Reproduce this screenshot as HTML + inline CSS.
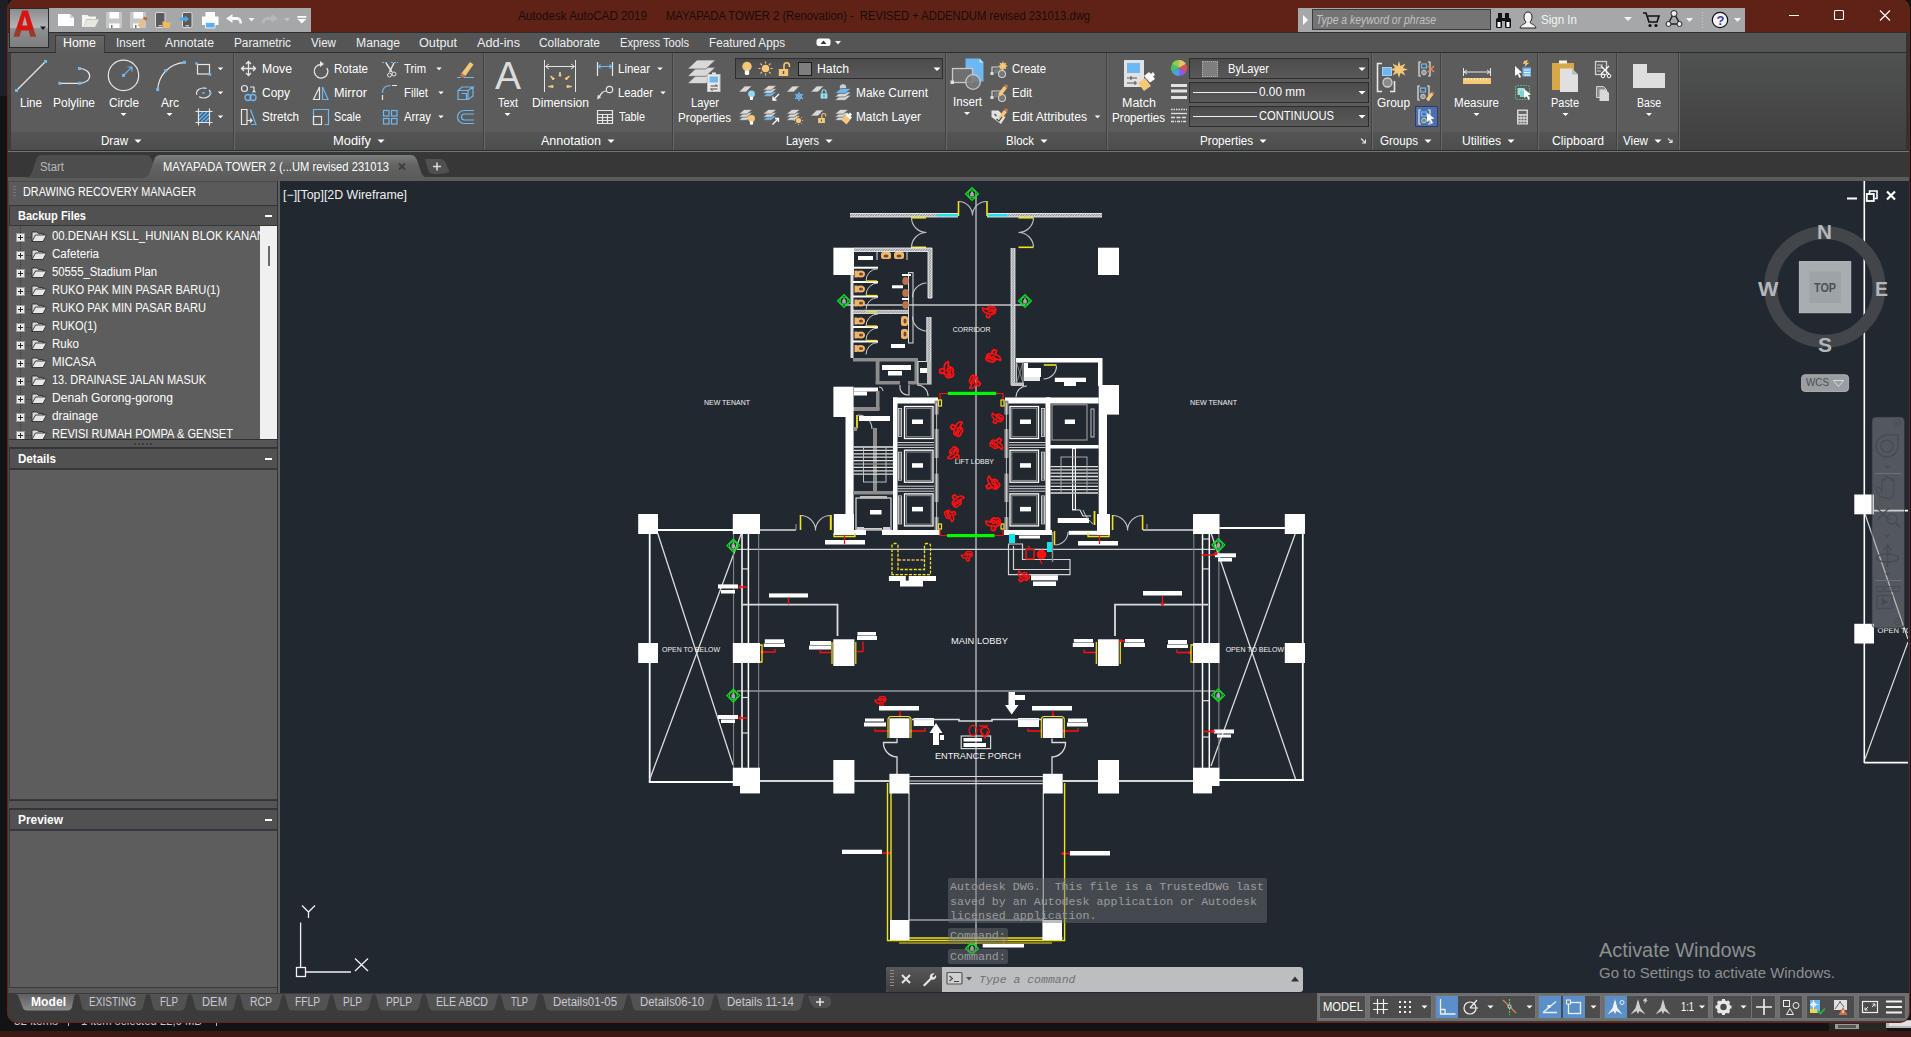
<!DOCTYPE html>
<html lang="en"><head><meta charset="utf-8"><title>Autodesk AutoCAD 2019 - MAYAPADA TOWER 2</title>
<style>
html,body{margin:0;padding:0;background:#131315;}
body{width:1911px;height:1037px;overflow:hidden;position:relative;font-family:"Liberation Sans",sans-serif;}
.b{position:absolute;display:block;}
.t{position:absolute;white-space:nowrap;transform-origin:0 50%;display:block;}
</style></head>
<body>
<div class="b" style="left:0px;top:0px;width:1911px;height:1037px;background:#131315;"></div>
<div class="b" style="left:0px;top:0px;width:8px;height:96px;background:#1d2026;"></div>
<div class="b" style="left:0px;top:1031px;width:1911px;height:6px;background:#3a1a12;"></div>
<span class="t" style="left:14px;top:1012.5px;height:16px;line-height:16px;font-size:12px;color:#c8c8c8;transform:scaleX(0.9702);">32 items</span>
<span class="t" style="left:81px;top:1012.5px;height:16px;line-height:16px;font-size:12px;color:#c8c8c8;transform:scaleX(0.9389);">1 item selected  22,6 MB</span>
<div class="b" style="left:68px;top:1014px;width:1px;height:12px;background:#bbb;"></div>
<div class="b" style="left:216px;top:1014px;width:1px;height:12px;background:#bbb;"></div>
<div class="b" style="left:1829px;top:1022px;width:58px;height:9px;background:#262626;"></div>
<div class="b" style="left:1835px;top:1024px;width:24px;height:5px;background:#9a9a9a;"></div>
<div class="b" style="left:1838px;top:1025px;width:18px;height:3px;background:#555;"></div>
<div class="b" style="left:1886px;top:1020px;width:25px;height:8px;background:#b5b5b5;"></div>
<div class="b" style="left:1889px;top:1021px;width:22px;height:5px;background:#e0e0e0;"></div>
<div class="b" id="win" style="left:8px;top:0;width:1901px;height:1022px;background:#3b3b3b;border-radius:9px 9px 9px 9px;overflow:hidden;box-shadow:0 0 0 1px #6a2415">
<div class="b" style="left:-8px;top:0;width:1911px;height:1037px">
<div class="b" style="left:8px;top:0px;width:1901px;height:32px;background:#5f2216;"></div>
<span class="t" style="left:518px;top:7.5px;height:16px;line-height:16px;font-size:12px;color:#1c0b08;transform:scaleX(0.9717);">Autodesk AutoCAD 2019</span>
<span class="t" style="left:666px;top:7.5px;height:16px;line-height:16px;font-size:12px;color:#1c0b08;transform:scaleX(0.9366);white-space:pre;">MAYAPADA TOWER 2 (Renovation) -  REVISED + ADDENDUM revised 231013.dwg</span>
<svg class="b" style="left:1780px;top:4px;" width="120" height="24" viewBox="0 0 120 24"><g stroke="#fff" stroke-width="1.1" fill="none"><path d="M9 11.5h10"/><rect x="54.5" y="6.5" width="9" height="9" rx="1"/><path d="M100 6.5l10 10M110 6.5l-10 10"/></g></svg>
<div class="b" style="left:49px;top:8px;width:262px;height:24px;background:#a6a7a9;"></div>
<svg class="b" style="left:49px;top:8px;" width="262" height="24" viewBox="0 0 262 24"><path d="M9 6h12l4 4v8H9z" fill="#fff"/><path d="M21 6v4h4z" fill="#d0d0d0"/><path d="M33 7h5.500l1.500 1.500h7V11H37.500L34.500 19H33z" fill="#f4f4f0"/><path d="M37.800 11.500H50L46 19H34.500z" fill="#e8e7e0"/><path d="M57 4h16v16H57z" fill="#c6c6c6"/><path d="M60.500 4h9.500v6.500h-9.500z" fill="#fff"/><path d="M60 15.500h10.500V20H60z" fill="#fff"/><path d="M62 17h1.500v3H62z" fill="#777"/><path d="M81 4h16v16H81z" fill="#c6c6c6"/><path d="M84.500 4h9.500v6.500h-9.500z" fill="#fff"/><path d="M84 15.500h7V20H84z" fill="#fff"/><path d="M86 17h1.500v3H86z" fill="#777"/><path d="M88.500 17.500l5.500-7 3 2.300-5.500 7z" fill="#ecbd7e"/><path d="M94 10.500l1.500-2 3 2.300-1.500 2z" fill="#b56a40"/><rect x="106.500" y="4.500" width="9.500" height="15" rx="1.500" fill="#5a5a5a" stroke="#dadada"/><rect x="109.500" y="17.300" width="3.500" height="1" fill="#eee"/><path d="M113.500 13.500h3l1 1h4.500l-1.500 5.500h-7z" fill="#f0b95e"/><rect x="133.500" y="4.500" width="9.500" height="15" rx="1.500" fill="#5a5a5a" stroke="#dadada"/><rect x="136.500" y="17.300" width="3.500" height="1" fill="#eee"/><path d="M131 9.500h5V7.500l4 3.500-4 3.500V12.500h-5z" fill="#4ea6ea"/><path d="M156.500 4h9.500v5h-9.500z" fill="#fff"/><path d="M153 8.500h16.500v8.500H153z" fill="#fff"/><path d="M156.500 14.500h9.500V20h-9.500z" fill="#5ab0f2" stroke="#fff" stroke-width=".800"/><path d="M177 10.500l6.500-4.500v3h4c3.500 0 5.500 2.500 5.500 6.500h-2.500c0-2-1-3.500-3-3.500h-4v3z" fill="#f6f6f6"/><path d="M199.500 10h6l-3 3.500z" fill="#f6f6f6"/><path d="M229 10.500l-6.500-4.500v3h-4c-3.500 0-5.500 2.500-5.500 6.500h2.500c0-2 1-3.500 3-3.500h4v3z" fill="#b6b7b9"/><path d="M235 10h6l-3 3.500z" fill="#c2c3c5"/><path d="M248.300 8h9v1.700h-9z M248.300 11h9l-4.500 4.500z" fill="#fff"/></svg>
<div class="b" style="left:1298px;top:8px;width:447px;height:24px;background:#a6a7a9;"></div>
<svg class="b" style="left:1298px;top:8px;" width="14" height="24" viewBox="0 0 14 24"><path d="M5 7l5 5-5 5z" fill="#fff"/></svg>
<div class="b" style="left:1312px;top:9px;width:179px;height:21px;background:#747474;border:1px solid #3c3c3c;box-sizing:border-box;"></div>
<span class="t" style="left:1316px;top:11.5px;height:16px;line-height:16px;font-size:12px;color:#c3c3c3;font-style:italic;transform:scaleX(0.8706);">Type a keyword or phrase</span>
<svg class="b" style="left:1496px;top:10px;" width="16" height="20" viewBox="0 0 16 20"><g fill="#111"><rect x="0" y="8" width="6" height="10" rx="1.500"/><rect x="9" y="8" width="6" height="10" rx="1.500"/><rect x="2" y="3" width="4" height="6"/><rect x="9" y="3" width="4" height="6"/><rect x="6" y="8" width="3" height="3"/></g><rect x="1.500" y="12" width="3" height="5" fill="#fff"/><rect x="10.500" y="12" width="3" height="5" fill="#fff"/></svg>
<svg class="b" style="left:1519px;top:10px;" width="18" height="20" viewBox="0 0 18 20"><path d="M9 2c3 0 4 2.500 4 5s-1 4-2 5c0 2 5 2 6 6H1c1-4 6-4 6-6-1-1-2-2.500-2-5s1-5 4-5z" fill="#f4f4f4" stroke="#222" stroke-width="1"/></svg>
<span class="t" style="left:1541px;top:12.0px;height:16px;line-height:16px;font-size:12px;color:#eef6ee;transform:scaleX(0.9636);">Sign In</span>
<svg class="b" style="left:1624px;top:17px;" width="9" height="6" viewBox="0 0 9 6"><path d="M0 0h8l-4 4z" fill="#f4f4f4"/></svg>
<svg class="b" style="left:1642px;top:10px;" width="18" height="20" viewBox="0 0 18 20"><path d="M1 3h3l3 9h8l2-6H6" fill="none" stroke="#111" stroke-width="1.600"/><circle cx="8" cy="15.500" r="1.600" fill="#111"/><circle cx="14" cy="15.500" r="1.600" fill="#111"/></svg>
<svg class="b" style="left:1665px;top:9px;" width="18" height="20" viewBox="0 0 18 20"><path d="M9 4L3 15h12z" fill="none" stroke="#222" stroke-width="1.500"/><circle cx="9" cy="4.500" r="3" fill="#eee" stroke="#222"/><circle cx="3.500" cy="15" r="2.500" fill="#eee" stroke="#222"/><circle cx="14.500" cy="15" r="2.500" fill="#eee" stroke="#222"/></svg>
<svg class="b" style="left:1686px;top:18px;" width="9" height="6" viewBox="0 0 9 6"><path d="M0 0h7l-3.500 4z" fill="#f4f4f4"/></svg>
<div class="b" style="left:1702px;top:12px;width:1px;height:16px;background:repeating-linear-gradient(#c8c8c8 0 1px,transparent 1px 3px);"></div>
<svg class="b" style="left:1711px;top:11px;" width="18" height="18" viewBox="0 0 18 18"><circle cx="9" cy="9" r="7.700" fill="#f4f4f4" stroke="#111" stroke-width="1.200"/></svg>
<span class="t" style="left:1716.5px;top:11.5px;height:17px;line-height:17px;font-size:13px;color:#3b3b9a;font-weight:bold;">?</span>
<svg class="b" style="left:1734px;top:18px;" width="9" height="6" viewBox="0 0 9 6"><path d="M0 0h7l-3.500 4z" fill="#f4f4f4"/></svg>
<div class="b" style="left:8px;top:33px;width:1901px;height:20px;background:#555;"></div>
<div class="b" style="left:8px;top:32px;width:1901px;height:1px;background:#2b2e31;"></div>
<div class="b" style="left:8px;top:52px;width:1901px;height:1.2px;background:#2b2e31;"></div>
<div class="b" style="left:55px;top:35px;width:50px;height:18px;background:linear-gradient(#676767,#5c5c5c);border:1px solid #3a3a3a;border-bottom:none;box-sizing:border-box;"></div>
<span class="t" style="left:63px;top:34.5px;height:16px;line-height:16px;font-size:12px;color:#fff;transform:scaleX(1.0309);">Home</span>
<span class="t" style="left:116px;top:34.5px;height:16px;line-height:16px;font-size:12px;color:#ecf0f4;transform:scaleX(0.9663);">Insert</span>
<span class="t" style="left:165px;top:34.5px;height:16px;line-height:16px;font-size:12px;color:#ecf0f4;transform:scaleX(1.0200);">Annotate</span>
<span class="t" style="left:234px;top:34.5px;height:16px;line-height:16px;font-size:12px;color:#ecf0f4;transform:scaleX(0.9825);">Parametric</span>
<span class="t" style="left:311px;top:34.5px;height:16px;line-height:16px;font-size:12px;color:#ecf0f4;transform:scaleX(0.9693);">View</span>
<span class="t" style="left:356px;top:34.5px;height:16px;line-height:16px;font-size:12px;color:#ecf0f4;transform:scaleX(1.0146);">Manage</span>
<span class="t" style="left:419px;top:34.5px;height:16px;line-height:16px;font-size:12px;color:#ecf0f4;transform:scaleX(1.0549);">Output</span>
<span class="t" style="left:477px;top:34.5px;height:16px;line-height:16px;font-size:12px;color:#ecf0f4;transform:scaleX(1.0568);">Add-ins</span>
<span class="t" style="left:539px;top:34.5px;height:16px;line-height:16px;font-size:12px;color:#ecf0f4;transform:scaleX(0.9940);">Collaborate</span>
<span class="t" style="left:620px;top:34.5px;height:16px;line-height:16px;font-size:12px;color:#ecf0f4;transform:scaleX(0.9264);">Express Tools</span>
<span class="t" style="left:709px;top:34.5px;height:16px;line-height:16px;font-size:12px;color:#ecf0f4;transform:scaleX(0.9737);">Featured Apps</span>
<svg class="b" style="left:816px;top:38px;" width="30" height="10" viewBox="0 0 30 10"><rect x="0.500" y="0.500" width="14" height="7.500" rx="2.500" fill="#fff"/><path d="M4.500 6h6l-3-3.500z" fill="#333"/><path d="M19 3h6l-3 3.500z" fill="#f0f0f0"/></svg>
<div class="b" style="left:8px;top:53px;width:1901px;height:98px;background:#5c5c5c;"></div>
<div class="b" style="left:1679px;top:53px;width:230px;height:98px;background:linear-gradient(#505251,#3f3f3f);"></div>
<div class="b" style="left:8px;top:150px;width:1901px;height:1px;background:#2b2e31;"></div>
<div class="b" style="left:8px;top:53px;width:2.5px;height:98px;background:#3c3c3c;"></div>
<div class="b" style="left:1906px;top:32px;width:3px;height:119px;background:#333;"></div>
<div class="b" style="left:11px;top:132px;width:222px;height:18px;background:linear-gradient(#545555,#4c4d4d);"></div>
<div class="b" style="left:233px;top:53px;width:1px;height:97px;background:#424242;"></div>
<div class="b" style="left:234px;top:53px;width:1px;height:97px;background:#676767;"></div>
<div class="b" style="left:235px;top:132px;width:248px;height:18px;background:linear-gradient(#545555,#4c4d4d);"></div>
<div class="b" style="left:483px;top:53px;width:1px;height:97px;background:#424242;"></div>
<div class="b" style="left:484px;top:53px;width:1px;height:97px;background:#676767;"></div>
<div class="b" style="left:485px;top:132px;width:187px;height:18px;background:linear-gradient(#545555,#4c4d4d);"></div>
<div class="b" style="left:672px;top:53px;width:1px;height:97px;background:#424242;"></div>
<div class="b" style="left:673px;top:53px;width:1px;height:97px;background:#676767;"></div>
<div class="b" style="left:674px;top:132px;width:271px;height:18px;background:linear-gradient(#545555,#4c4d4d);"></div>
<div class="b" style="left:945px;top:53px;width:1px;height:97px;background:#424242;"></div>
<div class="b" style="left:946px;top:53px;width:1px;height:97px;background:#676767;"></div>
<div class="b" style="left:947px;top:132px;width:159px;height:18px;background:linear-gradient(#545555,#4c4d4d);"></div>
<div class="b" style="left:1106px;top:53px;width:1px;height:97px;background:#424242;"></div>
<div class="b" style="left:1107px;top:53px;width:1px;height:97px;background:#676767;"></div>
<div class="b" style="left:1108px;top:132px;width:263px;height:18px;background:linear-gradient(#545555,#4c4d4d);"></div>
<div class="b" style="left:1371px;top:53px;width:1px;height:97px;background:#424242;"></div>
<div class="b" style="left:1372px;top:53px;width:1px;height:97px;background:#676767;"></div>
<div class="b" style="left:1373px;top:132px;width:67px;height:18px;background:linear-gradient(#545555,#4c4d4d);"></div>
<div class="b" style="left:1440px;top:53px;width:1px;height:97px;background:#424242;"></div>
<div class="b" style="left:1441px;top:53px;width:1px;height:97px;background:#676767;"></div>
<div class="b" style="left:1442px;top:132px;width:95px;height:18px;background:linear-gradient(#545555,#4c4d4d);"></div>
<div class="b" style="left:1537px;top:53px;width:1px;height:97px;background:#424242;"></div>
<div class="b" style="left:1538px;top:53px;width:1px;height:97px;background:#676767;"></div>
<div class="b" style="left:1539px;top:132px;width:77px;height:18px;background:linear-gradient(#545555,#4c4d4d);"></div>
<div class="b" style="left:1616px;top:53px;width:1px;height:97px;background:#424242;"></div>
<div class="b" style="left:1617px;top:53px;width:1px;height:97px;background:#676767;"></div>
<div class="b" style="left:1618px;top:132px;width:60px;height:18px;background:linear-gradient(#545555,#4c4d4d);"></div>
<div class="b" style="left:1678px;top:53px;width:1px;height:97px;background:#424242;"></div>
<div class="b" style="left:1679px;top:53px;width:1px;height:97px;background:#676767;"></div>
<div class="b" style="left:8px;top:151px;width:1901px;height:1px;background:#727476;"></div>
<div class="b" style="left:9px;top:8px;width:40px;height:40px;background:linear-gradient(#8b8c8e,#b4b5b6 48%,#8e8f90 52%,#7d7e7f);border:1px solid #2a2a2a;box-sizing:border-box;"></div>
<svg class="b" style="left:11px;top:9px;" width="36" height="30" viewBox="0 0 36 30"><g transform="translate(0.5 0) scale(.86 1)"><path d="M2.500 27.500L12.500 1.500h6.500l9.500 26h-6.500l-1.800-6h-9l-2 6z M12.500 16.500h6l-3-9.500z" fill="#d81410" fill-rule="evenodd"/><path d="M2.500 27.500l3-8 5.500 2-2 6zM22 27.500l-1.800-6 4.500-1.500 3.800 7.500z" fill="#93402a"/></g><path d="M29 17.500h6l-3 3.500z" fill="#1c1c1c"/></svg>
<span class="t" style="left:20px;top:94.5px;height:16px;line-height:16px;font-size:12px;color:#fff;transform:scaleX(0.9697);">Line</span>
<span class="t" style="left:53px;top:94.5px;height:16px;line-height:16px;font-size:12px;color:#fff;transform:scaleX(0.9994);">Polyline</span>
<span class="t" style="left:109px;top:94.5px;height:16px;line-height:16px;font-size:12px;color:#fff;transform:scaleX(0.9782);">Circle</span>
<span class="t" style="left:161px;top:94.5px;height:16px;line-height:16px;font-size:12px;color:#fff;transform:scaleX(1.0000);">Arc</span>
<span class="t" style="left:262px;top:60.5px;height:16px;line-height:16px;font-size:12px;color:#fff;transform:scaleX(1.0224);">Move</span>
<span class="t" style="left:262px;top:85.0px;height:16px;line-height:16px;font-size:12px;color:#fff;transform:scaleX(0.9995);">Copy</span>
<span class="t" style="left:262px;top:109.0px;height:16px;line-height:16px;font-size:12px;color:#fff;transform:scaleX(0.9733);">Stretch</span>
<span class="t" style="left:334px;top:60.5px;height:16px;line-height:16px;font-size:12px;color:#fff;transform:scaleX(0.9617);">Rotate</span>
<span class="t" style="left:334px;top:85.0px;height:16px;line-height:16px;font-size:12px;color:#fff;transform:scaleX(1.0535);">Mirror</span>
<span class="t" style="left:334px;top:109.0px;height:16px;line-height:16px;font-size:12px;color:#fff;transform:scaleX(0.8995);">Scale</span>
<span class="t" style="left:404px;top:60.5px;height:16px;line-height:16px;font-size:12px;color:#fff;transform:scaleX(0.9345);">Trim</span>
<span class="t" style="left:404px;top:85.0px;height:16px;line-height:16px;font-size:12px;color:#fff;transform:scaleX(0.9473);">Fillet</span>
<span class="t" style="left:404px;top:109.0px;height:16px;line-height:16px;font-size:12px;color:#fff;transform:scaleX(0.9418);">Array</span>
<span class="t" style="left:495px;top:55.0px;height:42px;line-height:42px;font-size:38px;color:#dcdcdc;transform:scaleX(1.0258);">A</span>
<span class="t" style="left:498px;top:94.5px;height:16px;line-height:16px;font-size:12px;color:#fff;transform:scaleX(0.9088);">Text</span>
<span class="t" style="left:532px;top:94.5px;height:16px;line-height:16px;font-size:12px;color:#fff;transform:scaleX(1.0055);">Dimension</span>
<span class="t" style="left:618px;top:60.5px;height:16px;line-height:16px;font-size:12px;color:#fff;transform:scaleX(0.9593);">Linear</span>
<span class="t" style="left:618px;top:85.0px;height:16px;line-height:16px;font-size:12px;color:#fff;transform:scaleX(0.9367);">Leader</span>
<span class="t" style="left:619px;top:109.0px;height:16px;line-height:16px;font-size:12px;color:#fff;transform:scaleX(0.9063);">Table</span>
<span class="t" style="left:691px;top:94.5px;height:16px;line-height:16px;font-size:12px;color:#fff;transform:scaleX(0.9328);">Layer</span>
<span class="t" style="left:678px;top:109.5px;height:16px;line-height:16px;font-size:12px;color:#fff;transform:scaleX(0.9691);">Properties</span>
<div class="b" style="left:735px;top:58px;width:208px;height:21px;background:linear-gradient(#4c4c4c,#585858);border:1px solid #2e2e2e;box-sizing:border-box;"></div>
<div class="b" style="left:798px;top:62px;width:14px;height:14px;background:#7e7e7e;border:1px solid #1c1c1c;box-sizing:border-box;"></div>
<span class="t" style="left:817px;top:60.5px;height:16px;line-height:16px;font-size:12px;color:#fff;transform:scaleX(1.0208);">Hatch</span>
<span class="t" style="left:856px;top:85.0px;height:16px;line-height:16px;font-size:12px;color:#fff;transform:scaleX(0.9905);">Make Current</span>
<span class="t" style="left:856px;top:109.0px;height:16px;line-height:16px;font-size:12px;color:#fff;transform:scaleX(0.9844);">Match Layer</span>
<span class="t" style="left:953px;top:94.0px;height:16px;line-height:16px;font-size:12px;color:#fff;transform:scaleX(0.9663);">Insert</span>
<span class="t" style="left:1012px;top:60.5px;height:16px;line-height:16px;font-size:12px;color:#fff;transform:scaleX(0.9440);">Create</span>
<span class="t" style="left:1012px;top:85.0px;height:16px;line-height:16px;font-size:12px;color:#fff;transform:scaleX(0.9672);">Edit</span>
<span class="t" style="left:1012px;top:109.0px;height:16px;line-height:16px;font-size:12px;color:#fff;transform:scaleX(1.0130);">Edit Attributes</span>
<span class="t" style="left:1122px;top:94.5px;height:16px;line-height:16px;font-size:12px;color:#fff;transform:scaleX(1.0405);">Match</span>
<span class="t" style="left:1112px;top:109.5px;height:16px;line-height:16px;font-size:12px;color:#fff;transform:scaleX(0.9691);">Properties</span>
<div class="b" style="left:1189px;top:58px;width:180px;height:21px;background:linear-gradient(#4c4c4c,#585858);border:1px solid #2e2e2e;box-sizing:border-box;"></div>
<div class="b" style="left:1189px;top:82px;width:180px;height:21px;background:linear-gradient(#4c4c4c,#585858);border:1px solid #2e2e2e;box-sizing:border-box;"></div>
<div class="b" style="left:1189px;top:105.5px;width:180px;height:21px;background:linear-gradient(#4c4c4c,#585858);border:1px solid #2e2e2e;box-sizing:border-box;"></div>
<div class="b" style="left:1202px;top:61px;width:16px;height:16px;background:#7e7e7e;border:1px dotted #aaa;box-sizing:border-box;"></div>
<span class="t" style="left:1228px;top:60.5px;height:16px;line-height:16px;font-size:12px;color:#fff;transform:scaleX(0.9314);">ByLayer</span>
<div class="b" style="left:1193px;top:91.5px;width:64px;height:1.3px;background:#f0f0f0;"></div>
<span class="t" style="left:1259px;top:84.0px;height:16px;line-height:16px;font-size:12px;color:#fff;transform:scaleX(0.9854);">0.00 mm</span>
<div class="b" style="left:1193px;top:115.5px;width:64px;height:1.3px;background:#f0f0f0;"></div>
<span class="t" style="left:1259px;top:108.0px;height:16px;line-height:16px;font-size:12px;color:#fff;transform:scaleX(0.9298);">CONTINUOUS</span>
<span class="t" style="left:1377px;top:94.5px;height:16px;line-height:16px;font-size:12px;color:#fff;transform:scaleX(0.9895);">Group</span>
<div class="b" style="left:1415px;top:106px;width:23px;height:21px;background:#4d6fae;border:1px solid #2d3c6a;box-sizing:border-box;"></div>
<span class="t" style="left:1454px;top:94.5px;height:16px;line-height:16px;font-size:12px;color:#fff;transform:scaleX(0.9639);">Measure</span>
<span class="t" style="left:1551px;top:94.5px;height:16px;line-height:16px;font-size:12px;color:#fff;transform:scaleX(0.9125);">Paste</span>
<span class="t" style="left:1637px;top:94.5px;height:16px;line-height:16px;font-size:12px;color:#fff;transform:scaleX(0.8775);">Base</span>
<span class="t" style="left:101px;top:132.5px;height:16px;line-height:16px;font-size:12px;color:#fff;transform:scaleX(0.9642);">Draw</span>
<span class="t" style="left:333px;top:132.5px;height:16px;line-height:16px;font-size:12px;color:#fff;transform:scaleX(1.0752);">Modify</span>
<span class="t" style="left:541px;top:132.5px;height:16px;line-height:16px;font-size:12px;color:#fff;transform:scaleX(1.0456);">Annotation</span>
<span class="t" style="left:786px;top:132.5px;height:16px;line-height:16px;font-size:12px;color:#fff;transform:scaleX(0.9162);">Layers</span>
<span class="t" style="left:1006px;top:132.5px;height:16px;line-height:16px;font-size:12px;color:#fff;transform:scaleX(0.9542);">Block</span>
<span class="t" style="left:1200px;top:132.5px;height:16px;line-height:16px;font-size:12px;color:#fff;transform:scaleX(0.9691);">Properties</span>
<span class="t" style="left:1380px;top:132.5px;height:16px;line-height:16px;font-size:12px;color:#fff;transform:scaleX(0.9657);">Groups</span>
<span class="t" style="left:1462px;top:132.5px;height:16px;line-height:16px;font-size:12px;color:#fff;transform:scaleX(1.0085);">Utilities</span>
<span class="t" style="left:1552px;top:132.5px;height:16px;line-height:16px;font-size:12px;color:#fff;transform:scaleX(1.0124);">Clipboard</span>
<span class="t" style="left:1623px;top:132.5px;height:16px;line-height:16px;font-size:12px;color:#fff;transform:scaleX(0.9693);">View</span>
<svg class="b" style="left:0;top:0" width="1911" height="160" viewBox="0 0 1911 160"><path d="M16.5 90.5L45.500 61.5" stroke="#e6e6e6" stroke-width="1.2"/><rect x="15.0" y="89.0" width="3" height="3" fill="#6db8f2"/><rect x="44.0" y="60.0" width="3" height="3" fill="#6db8f2"/><path d="M60 83.3H79.4A10.3 7.4 0 0 0 79.4 68.5" stroke="#e6e6e6" stroke-width="1.2" fill="none"/><rect x="58.2" y="81.8" width="3" height="3" fill="#6db8f2"/><rect x="77.9" y="81.8" width="3" height="3" fill="#6db8f2"/><rect x="77.9" y="67.0" width="3" height="3" fill="#6db8f2"/><circle cx="123.5" cy="75.4" r="15.2" stroke="#e6e6e6" stroke-width="1.2" fill="none"/><rect x="122.0" y="73.9" width="3" height="3" fill="#6db8f2"/><path d="M124.5 74.4L131.500 67.4M127.5 67h4.5v4.5" stroke="#6db8f2" stroke-width="1.2" fill="none"/><path d="M157.7 89.6C158.5 76 168 64 184.4 62.4" stroke="#e6e6e6" stroke-width="1.2" fill="none"/><rect x="156.2" y="88.1" width="3" height="3" fill="#6db8f2"/><rect x="164.1" y="69.1" width="3" height="3" fill="#6db8f2"/><rect x="182.9" y="60.9" width="3" height="3" fill="#6db8f2"/><rect x="197.5" y="64.5" width="12" height="9.5" stroke="#e6e6e6" stroke-width="1.2" fill="none"/><rect x="195.25" y="62.25" width="2.5" height="2.5" fill="#6db8f2"/><rect x="208.75" y="73.25" width="2.5" height="2.5" fill="#6db8f2"/><ellipse cx="203.5" cy="93" rx="7" ry="5" stroke="#e6e6e6" stroke-width="1.2" fill="none" stroke-dasharray="14 3"/><rect x="202.5" y="87.0" width="2" height="2" fill="#6db8f2"/><rect x="202.5" y="92.0" width="2" height="2" fill="#6db8f2"/><rect x="209.5" y="92.0" width="2" height="2" fill="#6db8f2"/><rect x="199" y="112" width="10" height="10" fill="#3f5f7f"/><path d="M199 116l4-4M199 120l8-8M201 122l8-8M205 122l4-4" stroke="#6db8f2" stroke-width="1.200"/><path d="M195.5 111.500h17M195.5 122.5h17M198.5 108.5v17M209.5 108.5v17" stroke="#e6e6e6" stroke-width="1.2"/><path d="M217.75 67.5h5.5l-2.75 2.75z" fill="#fff"/><path d="M217.75 91.5h5.5l-2.75 2.75z" fill="#fff"/><path d="M217.75 115.5h5.5l-2.75 2.75z" fill="#fff"/><path d="M120.5 113.0h6l-3.0 3.0z" fill="#fff"/><path d="M166.5 113.0h6l-3.0 3.0z" fill="#fff"/><path d="M248.5 61.5v14M241.500 68.5h14M246 64l2.500-2.500 2.500 2.500M246 73l2.500 2.500 2.500-2.500M244 66l-2.500 2.500 2.500 2.500M253 66l2.500 2.500-2.500 2.500" stroke="#e6e6e6" stroke-width="1.3" fill="none"/><circle cx="244.5" cy="88.5" r="3" stroke="#e6e6e6" fill="none" stroke-width="1.2"/><path d="M250 87h4v4M252.5 92.5l1.500-2 1.500 2" stroke="#e6e6e6" fill="none" stroke-width="1.2"/><circle cx="248" cy="97.5" r="3" stroke="#6db8f2" fill="none" stroke-width="1.300"/><circle cx="253" cy="97.5" r="3" stroke="#6db8f2" fill="none" stroke-width="1.300"/><path d="M241.500 109.500h5.500v15h-5.500zM247 120.500h5M250 118.500l2 2-2 2" stroke="#e6e6e6" fill="none" stroke-width="1.200"/><path d="M250.5 109.5l5.500 15h-5" stroke="#6db8f2" fill="none" stroke-width="1.200"/><path d="M321 64.500a6.800 6.800 0 1 0 6 3.500" stroke="#e6e6e6" fill="none" stroke-width="1.300"/><path d="M320 61l4 3-4 3z" fill="#e6e6e6"/><path d="M319.500 87l-6 12.500h6z" stroke="#e6e6e6" fill="none" stroke-width="1.200"/><path d="M322.500 87l5.500 12.500h-5.500z" stroke="#6db8f2" fill="none" stroke-width="1.200"/><path d="M313.500 124.500v-15h15v15h-4" stroke="#6db8f2" fill="none" stroke-width="1.200"/><rect x="313.500" y="116.500" width="8" height="8" stroke="#e6e6e6" fill="none" stroke-width="1.200"/><path d="M382 62.500h5M391 62.500h7" stroke="#6db8f2" stroke-width="1.200" stroke-dasharray="2 1"/><path d="M386 63l6 9M394 63l-4.500 9" stroke="#e6e6e6" stroke-width="1.400"/><circle cx="389.500" cy="75" r="2" stroke="#e6e6e6" fill="none"/><circle cx="394" cy="74" r="2" stroke="#e6e6e6" fill="none"/><path d="M382.500 100v-5M392 85.500h5" stroke="#e6e6e6" stroke-width="1.200"/><path d="M382.500 93c0-5 3-7.500 8-7.500" stroke="#6db8f2" fill="none" stroke-width="1.200"/><rect x="383.5" y="110.5" width="5.5" height="5.5" stroke="#6db8f2" fill="none" stroke-width="1.200"/><rect x="383.5" y="118.5" width="5.5" height="5.5" stroke="#6db8f2" fill="none" stroke-width="1.200"/><rect x="391.5" y="110.5" width="5.5" height="5.5" stroke="#6db8f2" fill="none" stroke-width="1.200"/><rect x="391.5" y="118.5" width="5.5" height="5.5" stroke="#6db8f2" fill="none" stroke-width="1.200"/><path d="M461 74l9-12 3.500 2.500-8.500 12z" fill="#f5c878"/><path d="M460 75.500l2-2.500 3.500 2.500-2 2.500z" fill="#c07a50"/><path d="M457 77.500h4M464 77.500h10" stroke="#6db8f2" stroke-width="1.200"/><path d="M458 90.500h10v9h-10zM458 90.500l4-3.500h11l-5 3.500M473 87v9l-5 3.500M461.500 93.500h5v6" stroke="#6db8f2" fill="none" stroke-width="1.200"/><path d="M474 110.500h-10a6.500 6.500 0 0 0 0 13h10M474 114h-9.500a3 3 0 0 0 0 6h9.500" stroke="#6db8f2" fill="none" stroke-width="1.200"/><path d="M436.25 67.5h5.5l-2.75 2.75z" fill="#fff"/><path d="M438.25 91.5h5.5l-2.75 2.75z" fill="#fff"/><path d="M438.25 115.5h5.5l-2.75 2.75z" fill="#fff"/><path d="M504.5 113.0h6l-3.0 3.0z" fill="#fff"/><path d="M544.500 60v32M575.500 60v32M546 66.500h28M549 64l-3.500 2.500 3.500 2.500M571 64l3.500 2.500-3.500 2.500" stroke="#e6e6e6" fill="none" stroke-width="1"/><path d="M559 76l1-4 1 4zM553 80l-2.500-4 4 2.500zM566.500 80l3-4-4.500 2.500zM548 86.500l5-1v2zM572 86.500l-5-1v2z" fill="#f5c878" stroke="#f5c878" stroke-width="1"/><path d="M597.500 62v14M612.500 62v14" stroke="#e6e6e6" stroke-width="1.200"/><path d="M598 66.500h14M600.500 64.500l-2 2 2 2M609.500 64.500l2 2-2 2" stroke="#6db8f2" fill="none" stroke-width="1.100"/><circle cx="609.500" cy="89.500" r="3.200" stroke="#e6e6e6" fill="none" stroke-width="1.200"/><path d="M606.500 91c-4 0-5 2-8 7" stroke="#e6e6e6" fill="none" stroke-width="1.200"/><path d="M597 99.500l1-5 3 3z" fill="#e6e6e6"/><path d="M597.500 110.500h15v13h-15zM597.500 114.500h15M597.500 117.500h15M597.500 120.500h15M602.500 114.500v9M607.500 114.500v9" stroke="#e6e6e6" fill="none" stroke-width="1.200"/><path d="M657.25 67.5h5.5l-2.75 2.75z" fill="#fff"/><path d="M660.25 91.5h5.5l-2.75 2.75z" fill="#fff"/><path d="M687.5 83.6L697.0 74.6H715.5L706.0 83.6z" fill="#d9d9d9" stroke="#5c5c5c" stroke-width=".700"/><path d="M687.5 76.3L697.0 67.3H715.5L706.0 76.3z" fill="#d9d9d9" stroke="#5c5c5c" stroke-width=".700"/><path d="M687.5 69.0L697.0 60.0H715.5L706.0 69.0z" fill="#d9d9d9" stroke="#5c5c5c" stroke-width=".700"/><rect x="707.500" y="74.500" width="12.500" height="17" fill="#e9e9e9" stroke="#c4c4c4"/><rect x="709.500" y="76.500" width="8.500" height="6" fill="#6db8f2"/><path d="M710.500 86h7M715.500 84.500l2 1.500M710.500 89h7M712.500 90.500l-2-1.500" stroke="#444" fill="none"/><rect x="712" y="72.500" width="4" height="2" fill="#e9e9e9"/><g transform="translate(747 68) scale(1)"><circle cx="0" cy="-1.500" r="4.700" fill="#f5c878"/><path d="M-2.200 2.500h4.400v3.500l-1 1h-2.400l-1-1z" fill="#fff"/></g><g transform="translate(765.5 68.5) scale(1)"><circle r="3.800" fill="#f5c878"/><path d="M0-7v2M0 7v-2M-7 0h2M7 0h-2M-5-5l1.500 1.500M5-5l-1.500 1.500M-5 5l1.500-1.500M5 5l-1.500-1.500" stroke="#f5c878" stroke-width="1.100"/></g><g transform="translate(783.5 69) scale(1)"><rect x="-4.700" y="0" width="9.400" height="7" fill="#f5c878"/><path d="M0.500 0v-3.500a2.700 2.700 0 0 1 5.400 0v1.500" stroke="#f5c878" fill="none" stroke-width="1.600"/><rect x="-0.700" y="2" width="1.400" height="3" fill="#555"/></g><path d="M933.5 67.5h7l-3.5 3.5z" fill="#fff"/><path d="M738.7 92L744.7 86H752.0L746.0 92z" fill="#d9d9d9" stroke="#5c5c5c" stroke-width=".700"/><g transform="translate(751.5 95) scale(0.72)"><circle cx="0" cy="-1.500" r="4.700" fill="#8fd8f8"/><path d="M-2.200 2.500h4.400v3.500l-1 1h-2.400l-1-1z" fill="#fff"/></g><path d="M762.9 96.39999999999999L768.4 91.8H776.6999999999999L771.1999999999999 96.39999999999999z" fill="#6db8f2" stroke="#5c5c5c" stroke-width=".700"/><path d="M762.9 93.29999999999998L768.4 88.69999999999999H776.6999999999999L771.1999999999999 93.29999999999998z" fill="#d9d9d9" stroke="#5c5c5c" stroke-width=".700"/><path d="M762.9 90.19999999999999L768.4 85.6H776.6999999999999L771.1999999999999 90.19999999999999z" fill="#d9d9d9" stroke="#5c5c5c" stroke-width=".700"/><path d="M779 94l-6 6M773 96.500v3.500h3.500" stroke="#fff" fill="none" stroke-width="1.300"/><path d="M786.4 92L792.4 86H799.6999999999999L793.6999999999999 92z" fill="#d9d9d9" stroke="#5c5c5c" stroke-width=".700"/><g transform="translate(799 96.500)" stroke="#6db8f2" stroke-width="1.100" fill="none"><path d="M0-4.500v9M-4-2.200l8 4.400M-4 2.200l8-4.400"/><circle r="2.500"/></g><path d="M810.6 92L816.6 86H823.9L817.9 92z" fill="#d9d9d9" stroke="#5c5c5c" stroke-width=".700"/><g transform="translate(824 93.5) scale(0.72)"><rect x="-4.700" y="0" width="9.400" height="7" fill="#9be0f4"/><path d="M-2.700 0v-2.500a2.700 2.700 0 0 1 5.400 0v2.500" stroke="#9be0f4" fill="none" stroke-width="1.600"/><rect x="-0.700" y="2" width="1.400" height="3" fill="#555"/></g><circle cx="843" cy="87.500" r="3.200" fill="#cfcfcf"/><path d="M834.7 100.3L840.7 95.3H851.2L845.2 100.3z" fill="#d9d9d9" stroke="#5c5c5c" stroke-width=".700"/><path d="M834.7 96.9L840.7 91.9H851.2L845.2 96.9z" fill="#d9d9d9" stroke="#5c5c5c" stroke-width=".700"/><path d="M834.7 93.5L840.7 88.5H851.2L845.2 93.5z" fill="#6db8f2" stroke="#5c5c5c" stroke-width=".700"/><path d="M738.7 120.3L744.2 115.7H752.5L747.0 120.3z" fill="#d9d9d9" stroke="#5c5c5c" stroke-width=".700"/><path d="M738.7 117.19999999999999L744.2 112.6H752.5L747.0 117.19999999999999z" fill="#d9d9d9" stroke="#5c5c5c" stroke-width=".700"/><path d="M738.7 114.1L744.2 109.5H752.5L747.0 114.1z" fill="#d9d9d9" stroke="#5c5c5c" stroke-width=".700"/><g transform="translate(751.5 119.5) scale(0.74)"><circle cx="0" cy="-1.500" r="4.700" fill="#f5c878"/><path d="M-2.200 2.500h4.400v3.500l-1 1h-2.400l-1-1z" fill="#fff"/></g><path d="M762.9 120.3L768.4 115.7H776.6999999999999L771.1999999999999 120.3z" fill="#6db8f2" stroke="#5c5c5c" stroke-width=".700"/><path d="M762.9 117.19999999999999L768.4 112.6H776.6999999999999L771.1999999999999 117.19999999999999z" fill="#d9d9d9" stroke="#5c5c5c" stroke-width=".700"/><path d="M762.9 114.1L768.4 109.5H776.6999999999999L771.1999999999999 114.1z" fill="#d9d9d9" stroke="#5c5c5c" stroke-width=".700"/><path d="M772.500 124.500l6-6M775 118.500h3.500v3.500" stroke="#fff" fill="none" stroke-width="1.300"/><path d="M786.4 120.3L791.9 115.7H800.1999999999999L794.6999999999999 120.3z" fill="#d9d9d9" stroke="#5c5c5c" stroke-width=".700"/><path d="M786.4 117.19999999999999L791.9 112.6H800.1999999999999L794.6999999999999 117.19999999999999z" fill="#d9d9d9" stroke="#5c5c5c" stroke-width=".700"/><path d="M786.4 114.1L791.9 109.5H800.1999999999999L794.6999999999999 114.1z" fill="#d9d9d9" stroke="#5c5c5c" stroke-width=".700"/><g transform="translate(798.5 120.5) scale(0.68)"><circle r="3.800" fill="#f5c878"/><path d="M0-7v2M0 7v-2M-7 0h2M7 0h-2M-5-5l1.500 1.500M5-5l-1.500 1.500M-5 5l1.500-1.500M5 5l-1.500-1.500" stroke="#f5c878" stroke-width="1.100"/></g><path d="M810.6 116L816.6 110H823.9L817.9 116z" fill="#d9d9d9" stroke="#5c5c5c" stroke-width=".700"/><g transform="translate(821.5 118) scale(0.72)"><rect x="-4.700" y="0" width="9.400" height="7" fill="#f5c878"/><path d="M0.500 0v-3.500a2.700 2.700 0 0 1 5.400 0v1.500" stroke="#f5c878" fill="none" stroke-width="1.600"/><rect x="-0.700" y="2" width="1.400" height="3" fill="#555"/></g><path d="M834.7 120.3L840.2 115.7H848.7L843.2 120.3z" fill="#d9d9d9" stroke="#5c5c5c" stroke-width=".700"/><path d="M834.7 117.19999999999999L840.2 112.6H848.7L843.2 117.19999999999999z" fill="#d9d9d9" stroke="#5c5c5c" stroke-width=".700"/><path d="M834.7 114.1L840.2 109.5H848.7L843.2 114.1z" fill="#d9d9d9" stroke="#5c5c5c" stroke-width=".700"/><path d="M841.500 120l4-5 5 4.500-4 5z" fill="#f5c878"/><path d="M845.500 115l1.500-2 1.500 1 1.500-1.500 2 2-1.500 1.500 1.500 1.500-2 2z" fill="#fff"/><path d="M965.500 58.500h14l4 4v19h-18z" fill="#6db8f2"/><path d="M979.500 58.500l4 4h-4z" fill="#bfe8e0"/><rect x="952.500" y="68.500" width="20" height="14" fill="#6f6f6f" stroke="#c9c9c9" stroke-width="1.300"/><circle cx="973" cy="82" r="7.300" fill="#7a7a7a" fill-opacity=".85" stroke="#c9c9c9" stroke-width="1.300"/><rect x="950.500" y="80.500" width="3.500" height="3.500" fill="#ddd"/><path d="M964.0 112.0h6l-3.0 3.0z" fill="#fff"/><path d="M992 73v-6h10v3" stroke="#d0d0d0" fill="none" stroke-width="1.200"/><rect x="994" y="68.5" width="6.500" height="5" fill="#777"/><circle cx="1002" cy="74" r="3.500" fill="#777" stroke="#d0d0d0" stroke-width="1.100"/><rect x="990.5" y="72" width="3" height="3" fill="#ddd"/><path d="M1003 61l1 2.500 2.500-1-1 2.500 2.500 1-2.500 1 1 2.500-2.500-1-1 2.500-1-2.500-2.500 1 1-2.500-2.500-1 2.500-1-1-2.500 2.500 1z" fill="#f5c878"/><path d="M992 97v-6h10v3" stroke="#d0d0d0" fill="none" stroke-width="1.200"/><rect x="994" y="92.5" width="6.500" height="5" fill="#777"/><circle cx="1002" cy="98" r="3.500" fill="#777" stroke="#d0d0d0" stroke-width="1.100"/><rect x="990.5" y="96" width="3" height="3" fill="#ddd"/><path d="M998 94l6-8 3 2-6 8z" fill="#f5c878"/><path d="M1004 86l1.500-2 3 2-1.500 2z" fill="#c07a50"/><path d="M991.500 110.500h7l7 7-1 1-3.500 5.500-9.500-7z" fill="#e2e2e2"/><path d="M998 118l6-8 3 2-6 8z" fill="#f5c878"/><path d="M1004 110l1.500-2 3 2-1.500 2z" fill="#c07a50"/><path d="M994.500 114l2 2M996.500 119l2.500 2 3-4" stroke="#444" fill="none" stroke-width="1.200"/><path d="M1094.75 115.5h5.5l-2.75 2.75z" fill="#fff"/><rect x="1124" y="60" width="20" height="27" fill="#e2e2e2"/><rect x="1127" y="63" width="13" height="10" fill="#6db8f2"/><path d="M1127 78h10M1131 76v4M1127 83h10M1135 81v4" stroke="#555" stroke-width="1.100"/><path d="M1138 83l7-5 6 8-7 5z" fill="#f5c878"/><path d="M1144 76l5-4 2 2 2-2 2 3-2 1.500 2 2.500-5 3.500z" fill="#fff"/><path d="M1179 68L1179.00 60.00A8 8 0 0 1 1185.93 64.00z" fill="#e8c26a"/><path d="M1179 68L1185.93 64.00A8 8 0 0 1 1185.93 72.00z" fill="#d9534a"/><path d="M1179 68L1185.93 72.00A8 8 0 0 1 1179.00 76.00z" fill="#8a5cf0"/><path d="M1179 68L1179.00 76.00A8 8 0 0 1 1172.07 72.00z" fill="#4aa3e0"/><path d="M1179 68L1172.07 72.00A8 8 0 0 1 1172.07 64.00z" fill="#46c06a"/><path d="M1179 68L1172.07 64.00A8 8 0 0 1 1179.00 60.00z" fill="#8fd04a"/><path d="M1171 85.500h16M1171 91h16M1171 97.500h16" stroke="#e2e2e2" stroke-width="3"/><path d="M1171 85.500h16" stroke="#e2e2e2" stroke-width="2"/><path d="M1171 109.500h16" stroke="#e2e2e2" stroke-width="1.300" stroke-dasharray="1.500 1"/><path d="M1171 113.500h16" stroke="#e2e2e2" stroke-width="1.300"/><path d="M1171 117.500h16" stroke="#e2e2e2" stroke-width="1.300" stroke-dasharray="4 1.500"/><path d="M1171 121.500h16" stroke="#e2e2e2" stroke-width="1.300" stroke-dasharray="3 1 1 1"/><path d="M1358.5 67.5h7l-3.5 3.5z" fill="#fff"/><path d="M1358.5 91.0h7l-3.5 3.5z" fill="#fff"/><path d="M1358.5 115.0h7l-3.5 3.5z" fill="#fff"/><path d="M1361 138.500l4.500 4.500M1365.500 139.500v3.500h-3.500" stroke="#e0e0e0" fill="none" stroke-width="1.100"/><path d="M1382 63.500h-4.500v28h4.500M1394.500 81v10.500h-4.500" stroke="#e6e6e6" fill="none" stroke-width="1.600"/><rect x="1382.500" y="67.500" width="9" height="8" fill="#6db8f2" stroke="#9fd0f5"/><circle cx="1387.500" cy="82.500" r="4.500" fill="#8a8a8a" stroke="#cfcfcf" stroke-width="1.300"/><path d="M1399 61l1.500 5 5-2.500-2.500 4.500 5 1.500-5 1.500 2.500 4.500-5-2.500-1.500 5-1.500-5-5 2.500 2.500-4.500-5-1.500 5-1.500-2.500-4.500 5 2.500z" fill="#f5c878"/><path d="M1421 62h-2v14h2M1428 62h2v14h-2" stroke="#e6e6e6" fill="none" stroke-width="1.200"/><rect x="1421.5" y="64" width="5" height="4" fill="none" stroke="#6db8f2" stroke-width="1.200"/><circle cx="1424" cy="72.5" r="2.300" fill="#999" stroke="#ccc"/><path d="M1428 66l6 6M1434 66l-6 6" stroke="#e08a5a" stroke-width="1.600"/><path d="M1420 86h-2v14h2M1427 86h2v14h-2" stroke="#e6e6e6" fill="none" stroke-width="1.200"/><rect x="1420.5" y="88" width="5" height="4" fill="none" stroke="#6db8f2" stroke-width="1.200"/><circle cx="1423" cy="96.5" r="2.300" fill="#999" stroke="#ccc"/><path d="M1426 99l5-6.500 2.500 2-5 6.500z" fill="#f5c878"/><path d="M1431 92.500l1-1.500 2.500 2-1 1.500z" fill="#c07a50"/><path d="M1421 110h-2v14h2M1428 110h2v14h-2" stroke="#e6e6e6" fill="none" stroke-width="1.200"/><rect x="1421.5" y="112" width="5" height="4" fill="none" stroke="#6db8f2" stroke-width="1.200"/><circle cx="1424" cy="120.5" r="2.300" fill="#5a9a5a" stroke="#ccc"/><path d="M1427 113l0 9 2.500-2 2 4 1.500-1-2-4 3.500-.5z" fill="#fff"/><path d="M1463.500 68v8M1490.500 68v8M1464 72h26M1467 70l-3 2 3 2M1487 70l3 2-3 2" stroke="#e6e6e6" fill="none" stroke-width="1"/><rect x="1463" y="78" width="28" height="6" fill="#f5c878"/><path d="M1465.500 78v2.500M1468.500 78v2.500M1471.500 78v2.500M1474.500 78v2.500M1477.500 78v2.500M1480.500 78v2.500M1483.500 78v2.500M1486.500 78v2.500" stroke="#fff3d8" stroke-width=".800"/><path d="M1473.5 113.0h6l-3.0 3.0z" fill="#fff"/><path d="M1515 66v10l2.500-2 2 4 1.500-1-2-4 3-.5z" fill="#fff"/><rect x="1522.500" y="67.500" width="8.500" height="9" fill="#6db8f2"/><path d="M1524 70h6M1524 72.500h6M1524 75h6" stroke="#fff" stroke-width=".900"/><path d="M1524 61l4-1-1.500 3 3-.5-5 4.500 1-3.500-2.500.5z" fill="#f5c878"/><rect x="1515.500" y="85.500" width="14" height="14" rx="2" fill="none" stroke="#5fbf7a" stroke-dasharray="1.500 1.200" stroke-width="1.200"/><rect x="1517.500" y="88" width="7" height="7" fill="#9fe0e0"/><rect x="1520" y="91" width="7" height="6" fill="#7fd0d0"/><path d="M1524 89v9l2.500-2 2 4 1.500-1-2-4 3-.5z" fill="#fff"/><rect x="1517" y="109.500" width="11" height="15" fill="#d4d4d4"/><rect x="1518.500" y="111" width="8" height="3" fill="#666"/><path d="M1518.500 116.500h8M1518.500 119.500h8M1518.500 122.500h8" stroke="#666" stroke-width="1.500" stroke-dasharray="2 1"/><path d="M1552 63h22v27h-22z" fill="#d6a848"/><path d="M1559 60.500h8v3h-8z" fill="#f2f2f2"/><path d="M1560 68.500h12l6 6v17.500h-18z" fill="#e0e0e0"/><path d="M1572 68.500l6 6h-6z" fill="#bdbdbd"/><path d="M1562.5 113.0h6l-3.0 3.0z" fill="#fff"/><rect x="1595.500" y="61.500" width="11" height="13" fill="none" stroke="#cfcfcf" stroke-width="1.300"/><path d="M1597 65h6M1597 68h6M1597 71h4" stroke="#cfcfcf"/><path d="M1601 66l8 8M1609 66l-8 8" stroke="#fff" stroke-width="1.200"/><circle cx="1603" cy="76" r="1.800" fill="none" stroke="#fff"/><circle cx="1609" cy="76" r="1.800" fill="none" stroke="#fff"/><path d="M1596.500 86.500h7l3 3v8h-10z" fill="#8a8a8a" stroke="#cfcfcf"/><path d="M1599.500 89.500h6l3.500 3.500v8h-9.500z" fill="#d8d8d8"/><path d="M1633 64h14v9h18v15h-32z" fill="#dedede"/><path d="M1646.0 113.0h6l-3.0 3.0z" fill="#fff"/><path d="M134.5 139.5h7l-3.5 3.5z" fill="#fff"/><path d="M377.5 139.5h7l-3.5 3.5z" fill="#fff"/><path d="M607.5 139.5h7l-3.5 3.5z" fill="#fff"/><path d="M825.5 139.5h7l-3.5 3.5z" fill="#fff"/><path d="M1040.5 139.5h7l-3.5 3.5z" fill="#fff"/><path d="M1259.5 139.5h7l-3.5 3.5z" fill="#fff"/><path d="M1424.5 139.5h7l-3.5 3.5z" fill="#fff"/><path d="M1507.5 139.5h7l-3.5 3.5z" fill="#fff"/><path d="M1654.5 139.5h7l-3.5 3.5z" fill="#fff"/><path d="M1668 138.500l4 4M1672 139.500v3h-3" stroke="#e0e0e0" fill="none" stroke-width="1.100"/></svg>
<div class="b" style="left:8px;top:152px;width:1901px;height:26px;background:#373737;"></div>
<div class="b" style="left:8px;top:177px;width:1901px;height:4.5px;background:#5b5b5b;"></div>
<svg class="b" style="left:0;top:151px" width="480" height="30" viewBox="0 151 480 30"><defs><linearGradient id="atg" x1="0" y1="0" x2="0" y2="1"><stop offset="0" stop-color="#7c7e7f"/><stop offset=".45" stop-color="#626363"/><stop offset="1" stop-color="#5b5b5b"/></linearGradient></defs><path d="M22 178c8 0 9-3 11-9l3-9c1.500-4 3-5 8-5h100c5 0 6 1 8 5l3 9c2 6 3 9 11 9z" fill="#4d4d4d"/><path d="M140 178c8 0 9-3 11-9l3-9c1.500-4 3-5 8-5h247c5 0 6 1 8 5l3 9c2 6 3 9 11 9z" fill="url(#atg)"/><path d="M425 159h16c5 0 6 10 9 12-3 3-10 3-16 3-5 0-6-3-9-15z" fill="#505050"/><path d="M433 166.500h8M437 162.500v8" stroke="#d8d8d8" stroke-width="1.600"/><path d="M399 163.500l6 6M405 163.500l-6 6" stroke="#3e3e3e" stroke-width="1.800"/></svg>
<span class="t" style="left:40px;top:158.5px;height:16px;line-height:16px;font-size:12px;color:#b8b8b8;transform:scaleX(0.9471);">Start</span>
<span class="t" style="left:163px;top:158.5px;height:16px;line-height:16px;font-size:12px;color:#fff;transform:scaleX(0.9327);">MAYAPADA TOWER 2 (...UM revised 231013</span>
<div class="b" style="left:8px;top:181px;width:272px;height:812px;background:#4a4a4a;"></div>
<div class="b" style="left:9px;top:182px;width:269px;height:23px;background:#5a5a5a;"></div>
<div class="b" style="left:13px;top:186px;width:3px;height:12px;background:repeating-linear-gradient(#777 0 1px,transparent 1px 3px);"></div>
<span class="t" style="left:23px;top:183.8px;height:16px;line-height:16px;font-size:12px;color:#fff;transform:scaleX(0.9020);">DRAWING RECOVERY MANAGER</span>
<div class="b" style="left:9px;top:205px;width:269px;height:21px;background:#515151;border:1px solid #33373c;box-sizing:border-box;"></div>
<span class="t" style="left:18px;top:207.5px;height:16px;line-height:16px;font-size:12px;color:#fff;font-weight:bold;transform:scaleX(0.9186);">Backup Files</span>
<div class="b" style="left:265px;top:215px;width:7px;height:2px;background:#fff;"></div>
<div class="b" style="left:9px;top:226px;width:251px;height:213px;background:#5d5d5d;"></div>
<div class="b" style="left:260px;top:226px;width:18px;height:213px;background:#f0f0f0;"></div>
<div class="b" style="left:268px;top:246px;width:2px;height:20px;background:#6a6a6a;"></div>
<div class="b" style="left:9px;top:226px;width:251px;height:213px;overflow:hidden">
<div class="b" style="left:11px;top:0px;width:1px;height:213px;background:repeating-linear-gradient(#3a3a3a 0 1px,transparent 1px 2px);"></div>
<div class="b" style="left:11px;top:11px;width:12px;height:1px;background:repeating-linear-gradient(90deg,#3a3a3a 0 1px,transparent 1px 2px);"></div>
<div class="b" style="left:7px;top:6.5px;width:9px;height:9px;background:#e8e8e8;border:1px solid #9a9a9a;box-sizing:border-box;"></div>
<div class="b" style="left:9px;top:10.5px;width:5px;height:1px;background:#223;"></div>
<div class="b" style="left:11px;top:8.5px;width:1px;height:5px;background:#223;"></div>
<svg class="b" style="left:22px;top:4px" width="16" height="13" viewBox="0 0 16 13"><path d="M1 11.500V2h5l1.500 1.500H12V5" fill="#d8d8d8" stroke="#2e2e2e" stroke-width=".900"/><path d="M1 11.500L4.500 5H15.500L12 11.500z" fill="#e6e6e6" stroke="#2e2e2e" stroke-width=".900"/></svg>
<span class="t" style="left:43px;top:2.0px;height:16px;line-height:16px;font-size:12px;color:#fff;transform:scaleX(0.9506);">00.DENAH KSLL_HUNIAN BLOK KANAN</span>
<div class="b" style="left:11px;top:29px;width:12px;height:1px;background:repeating-linear-gradient(90deg,#3a3a3a 0 1px,transparent 1px 2px);"></div>
<div class="b" style="left:7px;top:24.5px;width:9px;height:9px;background:#e8e8e8;border:1px solid #9a9a9a;box-sizing:border-box;"></div>
<div class="b" style="left:9px;top:28.5px;width:5px;height:1px;background:#223;"></div>
<div class="b" style="left:11px;top:26.5px;width:1px;height:5px;background:#223;"></div>
<svg class="b" style="left:22px;top:22px" width="16" height="13" viewBox="0 0 16 13"><path d="M1 11.500V2h5l1.500 1.500H12V5" fill="#d8d8d8" stroke="#2e2e2e" stroke-width=".900"/><path d="M1 11.500L4.500 5H15.500L12 11.500z" fill="#e6e6e6" stroke="#2e2e2e" stroke-width=".900"/></svg>
<span class="t" style="left:43px;top:20.0px;height:16px;line-height:16px;font-size:12px;color:#fff;transform:scaleX(0.9653);">Cafeteria</span>
<div class="b" style="left:11px;top:47px;width:12px;height:1px;background:repeating-linear-gradient(90deg,#3a3a3a 0 1px,transparent 1px 2px);"></div>
<div class="b" style="left:7px;top:42.5px;width:9px;height:9px;background:#e8e8e8;border:1px solid #9a9a9a;box-sizing:border-box;"></div>
<div class="b" style="left:9px;top:46.5px;width:5px;height:1px;background:#223;"></div>
<div class="b" style="left:11px;top:44.5px;width:1px;height:5px;background:#223;"></div>
<svg class="b" style="left:22px;top:40px" width="16" height="13" viewBox="0 0 16 13"><path d="M1 11.500V2h5l1.500 1.500H12V5" fill="#d8d8d8" stroke="#2e2e2e" stroke-width=".900"/><path d="M1 11.500L4.500 5H15.500L12 11.500z" fill="#e6e6e6" stroke="#2e2e2e" stroke-width=".900"/></svg>
<span class="t" style="left:43px;top:38.0px;height:16px;line-height:16px;font-size:12px;color:#fff;transform:scaleX(0.9424);">50555_Stadium Plan</span>
<div class="b" style="left:11px;top:65px;width:12px;height:1px;background:repeating-linear-gradient(90deg,#3a3a3a 0 1px,transparent 1px 2px);"></div>
<div class="b" style="left:7px;top:60.5px;width:9px;height:9px;background:#e8e8e8;border:1px solid #9a9a9a;box-sizing:border-box;"></div>
<div class="b" style="left:9px;top:64.5px;width:5px;height:1px;background:#223;"></div>
<div class="b" style="left:11px;top:62.5px;width:1px;height:5px;background:#223;"></div>
<svg class="b" style="left:22px;top:58px" width="16" height="13" viewBox="0 0 16 13"><path d="M1 11.500V2h5l1.500 1.500H12V5" fill="#d8d8d8" stroke="#2e2e2e" stroke-width=".900"/><path d="M1 11.500L4.500 5H15.500L12 11.500z" fill="#e6e6e6" stroke="#2e2e2e" stroke-width=".900"/></svg>
<span class="t" style="left:43px;top:56.0px;height:16px;line-height:16px;font-size:12px;color:#fff;transform:scaleX(0.9286);">RUKO PAK MIN PASAR BARU(1)</span>
<div class="b" style="left:11px;top:83px;width:12px;height:1px;background:repeating-linear-gradient(90deg,#3a3a3a 0 1px,transparent 1px 2px);"></div>
<div class="b" style="left:7px;top:78.5px;width:9px;height:9px;background:#e8e8e8;border:1px solid #9a9a9a;box-sizing:border-box;"></div>
<div class="b" style="left:9px;top:82.5px;width:5px;height:1px;background:#223;"></div>
<div class="b" style="left:11px;top:80.5px;width:1px;height:5px;background:#223;"></div>
<svg class="b" style="left:22px;top:76px" width="16" height="13" viewBox="0 0 16 13"><path d="M1 11.500V2h5l1.500 1.500H12V5" fill="#d8d8d8" stroke="#2e2e2e" stroke-width=".900"/><path d="M1 11.500L4.500 5H15.500L12 11.500z" fill="#e6e6e6" stroke="#2e2e2e" stroke-width=".900"/></svg>
<span class="t" style="left:43px;top:74.0px;height:16px;line-height:16px;font-size:12px;color:#fff;transform:scaleX(0.9263);">RUKO PAK MIN PASAR BARU</span>
<div class="b" style="left:11px;top:101px;width:12px;height:1px;background:repeating-linear-gradient(90deg,#3a3a3a 0 1px,transparent 1px 2px);"></div>
<div class="b" style="left:7px;top:96.5px;width:9px;height:9px;background:#e8e8e8;border:1px solid #9a9a9a;box-sizing:border-box;"></div>
<div class="b" style="left:9px;top:100.5px;width:5px;height:1px;background:#223;"></div>
<div class="b" style="left:11px;top:98.5px;width:1px;height:5px;background:#223;"></div>
<svg class="b" style="left:22px;top:94px" width="16" height="13" viewBox="0 0 16 13"><path d="M1 11.500V2h5l1.500 1.500H12V5" fill="#d8d8d8" stroke="#2e2e2e" stroke-width=".900"/><path d="M1 11.500L4.500 5H15.500L12 11.500z" fill="#e6e6e6" stroke="#2e2e2e" stroke-width=".900"/></svg>
<span class="t" style="left:43px;top:92.0px;height:16px;line-height:16px;font-size:12px;color:#fff;transform:scaleX(0.9121);">RUKO(1)</span>
<div class="b" style="left:11px;top:119px;width:12px;height:1px;background:repeating-linear-gradient(90deg,#3a3a3a 0 1px,transparent 1px 2px);"></div>
<div class="b" style="left:7px;top:114.5px;width:9px;height:9px;background:#e8e8e8;border:1px solid #9a9a9a;box-sizing:border-box;"></div>
<div class="b" style="left:9px;top:118.5px;width:5px;height:1px;background:#223;"></div>
<div class="b" style="left:11px;top:116.5px;width:1px;height:5px;background:#223;"></div>
<svg class="b" style="left:22px;top:112px" width="16" height="13" viewBox="0 0 16 13"><path d="M1 11.500V2h5l1.500 1.500H12V5" fill="#d8d8d8" stroke="#2e2e2e" stroke-width=".900"/><path d="M1 11.500L4.500 5H15.500L12 11.500z" fill="#e6e6e6" stroke="#2e2e2e" stroke-width=".900"/></svg>
<span class="t" style="left:43px;top:110.0px;height:16px;line-height:16px;font-size:12px;color:#fff;transform:scaleX(0.9638);">Ruko</span>
<div class="b" style="left:11px;top:137px;width:12px;height:1px;background:repeating-linear-gradient(90deg,#3a3a3a 0 1px,transparent 1px 2px);"></div>
<div class="b" style="left:7px;top:132.5px;width:9px;height:9px;background:#e8e8e8;border:1px solid #9a9a9a;box-sizing:border-box;"></div>
<div class="b" style="left:9px;top:136.5px;width:5px;height:1px;background:#223;"></div>
<div class="b" style="left:11px;top:134.5px;width:1px;height:5px;background:#223;"></div>
<svg class="b" style="left:22px;top:130px" width="16" height="13" viewBox="0 0 16 13"><path d="M1 11.500V2h5l1.500 1.500H12V5" fill="#d8d8d8" stroke="#2e2e2e" stroke-width=".900"/><path d="M1 11.500L4.500 5H15.500L12 11.500z" fill="#e6e6e6" stroke="#2e2e2e" stroke-width=".900"/></svg>
<span class="t" style="left:43px;top:128.0px;height:16px;line-height:16px;font-size:12px;color:#fff;transform:scaleX(0.9564);">MICASA</span>
<div class="b" style="left:11px;top:155px;width:12px;height:1px;background:repeating-linear-gradient(90deg,#3a3a3a 0 1px,transparent 1px 2px);"></div>
<div class="b" style="left:7px;top:150.5px;width:9px;height:9px;background:#e8e8e8;border:1px solid #9a9a9a;box-sizing:border-box;"></div>
<div class="b" style="left:9px;top:154.5px;width:5px;height:1px;background:#223;"></div>
<div class="b" style="left:11px;top:152.5px;width:1px;height:5px;background:#223;"></div>
<svg class="b" style="left:22px;top:148px" width="16" height="13" viewBox="0 0 16 13"><path d="M1 11.500V2h5l1.500 1.500H12V5" fill="#d8d8d8" stroke="#2e2e2e" stroke-width=".900"/><path d="M1 11.500L4.500 5H15.500L12 11.500z" fill="#e6e6e6" stroke="#2e2e2e" stroke-width=".900"/></svg>
<span class="t" style="left:43px;top:146.0px;height:16px;line-height:16px;font-size:12px;color:#fff;transform:scaleX(0.9164);">13. DRAINASE JALAN MASUK</span>
<div class="b" style="left:11px;top:173px;width:12px;height:1px;background:repeating-linear-gradient(90deg,#3a3a3a 0 1px,transparent 1px 2px);"></div>
<div class="b" style="left:7px;top:168.5px;width:9px;height:9px;background:#e8e8e8;border:1px solid #9a9a9a;box-sizing:border-box;"></div>
<div class="b" style="left:9px;top:172.5px;width:5px;height:1px;background:#223;"></div>
<div class="b" style="left:11px;top:170.5px;width:1px;height:5px;background:#223;"></div>
<svg class="b" style="left:22px;top:166px" width="16" height="13" viewBox="0 0 16 13"><path d="M1 11.500V2h5l1.500 1.500H12V5" fill="#d8d8d8" stroke="#2e2e2e" stroke-width=".900"/><path d="M1 11.500L4.500 5H15.500L12 11.500z" fill="#e6e6e6" stroke="#2e2e2e" stroke-width=".900"/></svg>
<span class="t" style="left:43px;top:164.0px;height:16px;line-height:16px;font-size:12px;color:#fff;transform:scaleX(1.0076);">Denah Gorong-gorong</span>
<div class="b" style="left:11px;top:191px;width:12px;height:1px;background:repeating-linear-gradient(90deg,#3a3a3a 0 1px,transparent 1px 2px);"></div>
<div class="b" style="left:7px;top:186.5px;width:9px;height:9px;background:#e8e8e8;border:1px solid #9a9a9a;box-sizing:border-box;"></div>
<div class="b" style="left:9px;top:190.5px;width:5px;height:1px;background:#223;"></div>
<div class="b" style="left:11px;top:188.5px;width:1px;height:5px;background:#223;"></div>
<svg class="b" style="left:22px;top:184px" width="16" height="13" viewBox="0 0 16 13"><path d="M1 11.500V2h5l1.500 1.500H12V5" fill="#d8d8d8" stroke="#2e2e2e" stroke-width=".900"/><path d="M1 11.500L4.500 5H15.500L12 11.500z" fill="#e6e6e6" stroke="#2e2e2e" stroke-width=".900"/></svg>
<span class="t" style="left:43px;top:182.0px;height:16px;line-height:16px;font-size:12px;color:#fff;transform:scaleX(0.9849);">drainage</span>
<div class="b" style="left:11px;top:209px;width:12px;height:1px;background:repeating-linear-gradient(90deg,#3a3a3a 0 1px,transparent 1px 2px);"></div>
<div class="b" style="left:7px;top:204.5px;width:9px;height:9px;background:#e8e8e8;border:1px solid #9a9a9a;box-sizing:border-box;"></div>
<div class="b" style="left:9px;top:208.5px;width:5px;height:1px;background:#223;"></div>
<div class="b" style="left:11px;top:206.5px;width:1px;height:5px;background:#223;"></div>
<svg class="b" style="left:22px;top:202px" width="16" height="13" viewBox="0 0 16 13"><path d="M1 11.500V2h5l1.500 1.500H12V5" fill="#d8d8d8" stroke="#2e2e2e" stroke-width=".900"/><path d="M1 11.500L4.500 5H15.500L12 11.500z" fill="#e6e6e6" stroke="#2e2e2e" stroke-width=".900"/></svg>
<span class="t" style="left:43px;top:200.0px;height:16px;line-height:16px;font-size:12px;color:#fff;transform:scaleX(0.9243);">REVISI RUMAH POMPA &amp; GENSET</span>
</div>
<div class="b" style="left:9px;top:439px;width:269px;height:9px;background:#555;"></div>
<div class="b" style="left:9px;top:439px;width:269px;height:1px;background:#30343a;"></div>
<div class="b" style="left:9px;top:447px;width:269px;height:1px;background:#30343a;"></div>
<div class="b" style="left:134px;top:443px;width:18px;height:2px;background:repeating-linear-gradient(90deg,#3c3c3c 0 2px,transparent 2px 4px);"></div>
<div class="b" style="left:9px;top:448px;width:269px;height:21px;background:#515151;border:1px solid #33373c;box-sizing:border-box;"></div>
<span class="t" style="left:18px;top:450.5px;height:16px;line-height:16px;font-size:12px;color:#fff;font-weight:bold;transform:scaleX(0.9657);">Details</span>
<div class="b" style="left:265px;top:458px;width:7px;height:2px;background:#fff;"></div>
<div class="b" style="left:9px;top:469px;width:269px;height:331px;background:#5d5d5d;border:1px solid #373b40;box-sizing:border-box;"></div>
<div class="b" style="left:9px;top:800px;width:269px;height:9px;background:#555;"></div>
<div class="b" style="left:9px;top:800px;width:269px;height:1px;background:#30343a;"></div>
<div class="b" style="left:9px;top:808px;width:269px;height:1px;background:#30343a;"></div>
<div class="b" style="left:9px;top:809px;width:269px;height:21px;background:#515151;border:1px solid #33373c;box-sizing:border-box;"></div>
<span class="t" style="left:18px;top:811.5px;height:16px;line-height:16px;font-size:12px;color:#fff;font-weight:bold;transform:scaleX(0.9920);">Preview</span>
<div class="b" style="left:265px;top:819px;width:7px;height:2px;background:#fff;"></div>
<div class="b" style="left:9px;top:830px;width:269px;height:158px;background:#5d5d5d;border:1px solid #373b40;box-sizing:border-box;"></div>
<div class="b" style="left:9px;top:988px;width:269px;height:5px;background:#575757;"></div>
<div class="b" style="left:277px;top:181px;width:1px;height:812px;background:#2f3337;"></div>
<div class="b" style="left:278px;top:181px;width:2px;height:812px;background:#5f5f5f;"></div>
<div class="b" style="left:280px;top:181px;width:1629px;height:812px;background:#212830;"></div>
<svg class="b" style="left:280px;top:181px" width="1628" height="812" viewBox="280 181 1628 812" font-family="Liberation Sans, sans-serif"><defs><pattern id="hat" width="2.500" height="2.500" patternUnits="userSpaceOnUse"><rect width="2.500" height="2.500" fill="#6e7276"/><path d="M0 2.500L2.500 0M-1 1L1 -1M1.500 3.500L3.500 1.500" stroke="#f4f4f4" stroke-width=".900"/></pattern></defs><path d="M976.0 194.0L976.0 948.0" stroke="#c4c4c4" stroke-width="1.3" /><path d="M845.0 305.0L1025.0 305.0" stroke="#c4c4c4" stroke-width="1.3" /><path d="M737.0 549.3L1215.0 549.3" stroke="#cfcfcf" stroke-width="1.2" /><path d="M737.0 691.0L1215.0 691.0" stroke="#cfcfcf" stroke-width="1.2" /><rect x="850.0" y="213.5" width="108.0" height="3.5" fill="url(#hat)" /><rect x="987.0" y="213.5" width="115.0" height="3.5" fill="url(#hat)" /><path d="M850 213.5H958M850 217H958M987 213.5H1102M987 217H1102" stroke="#fff" stroke-width="0.8" fill="none" /><rect x="937.0" y="214.2" width="21.0" height="2.1" fill="#10e6f0" /><rect x="987.0" y="214.2" width="20.0" height="2.1" fill="#10e6f0" /><path d="M958.5 201.0L958.5 216.0" stroke="#f2e21c" stroke-width="1.6" /><path d="M987.0 201.0L987.0 216.0" stroke="#f2e21c" stroke-width="1.6" /><path d="M958.5 201.500A14 14 0 0 1 972.5 215.500M987 201.500A14 14 0 0 0 972.5 215.500" stroke="#bdbdbd" stroke-width="1.2" fill="none" /><path d="M911.0 217.8L926.0 217.8" stroke="#f2e21c" stroke-width="1.6" /><path d="M911.0 247.3L926.0 247.3" stroke="#f2e21c" stroke-width="1.6" /><path d="M911.5 218A15 15 0 0 0 926.5 232.500A15 15 0 0 0 911.5 247" stroke="#bdbdbd" stroke-width="1.2" fill="none" /><path d="M1018.5 217.8L1033.5 217.8" stroke="#f2e21c" stroke-width="1.6" /><path d="M1018.5 247.3L1033.5 247.3" stroke="#f2e21c" stroke-width="1.6" /><path d="M1033.5 218A15 15 0 0 1 1018.5 232.500A15 15 0 0 1 1033.5 247" stroke="#bdbdbd" stroke-width="1.2" fill="none" /><rect x="833.4" y="247.7" width="20.6" height="27.3" fill="#fff" /><rect x="1098.0" y="247.7" width="21.0" height="27.3" fill="#fff" /><rect x="854.0" y="248.0" width="78.0" height="3.5" fill="url(#hat)" /><rect x="928.0" y="248.0" width="4.0" height="50.0" fill="url(#hat)" /><rect x="926.8" y="317.0" width="4.2" height="44.0" fill="url(#hat)" /><path d="M854 248H932V298M854 251.500H928V298H932M926.8 317V361M931 317V361" stroke="#fff" stroke-width="0.8" fill="none" /><rect x="850.5" y="275.0" width="3.0" height="83.0" fill="#e0e0e0" /><rect x="853.0" y="310.3" width="55.0" height="3.2" fill="url(#hat)" /><path d="M853 310.300H908M853 313.500H908" stroke="#fff" stroke-width="0.7" fill="none" /><rect x="908.5" y="272.6" width="4.5" height="70.4" fill="none" stroke="#dcdcdc" stroke-width="1" /><rect x="853.0" y="266.7" width="25.0" height="2.0" fill="#fff" /><rect x="853.0" y="281.0" width="25.0" height="2.0" fill="#fff" /><rect x="853.0" y="295.5" width="25.0" height="2.0" fill="#fff" /><rect x="853.0" y="326.0" width="25.0" height="2.0" fill="#fff" /><rect x="853.0" y="340.5" width="25.0" height="2.0" fill="#fff" /><path d="M878 268.7A12 12 0 0 0 866 280.7" stroke="#c9c9c9" stroke-width="1" fill="none" /><path d="M878 283A12 12 0 0 0 866 295" stroke="#c9c9c9" stroke-width="1" fill="none" /><path d="M878 297.5A12 12 0 0 0 866 309.5" stroke="#c9c9c9" stroke-width="1" fill="none" /><path d="M878 314A12 12 0 0 0 866 326" stroke="#c9c9c9" stroke-width="1" fill="none" /><path d="M878 328A12 12 0 0 0 866 340" stroke="#c9c9c9" stroke-width="1" fill="none" /><path d="M878 342.5A12 12 0 0 0 866 354.5" stroke="#c9c9c9" stroke-width="1" fill="none" /><path d="M866.0 281.0L877.0 281.0" stroke="#f2e21c" stroke-width="1.3" /><path d="M866.0 295.5L877.0 295.5" stroke="#f2e21c" stroke-width="1.3" /><path d="M866.0 311.8L877.0 311.8" stroke="#f2e21c" stroke-width="1.3" /><path d="M866.0 326.0L877.0 326.0" stroke="#f2e21c" stroke-width="1.3" /><path d="M866.0 340.5L877.0 340.5" stroke="#f2e21c" stroke-width="1.3" /><path d="M926.5 283A14.5 14.5 0 0 0 912.5 297.500M912.5 316.500A14.5 14.5 0 0 0 926.500 331" stroke="#c9c9c9" stroke-width="1.1" fill="none" /><ellipse cx="860.5" cy="274" rx="4.500" ry="3.500" fill="#f0b46c"/><rect x="854.500" y="270.5" width="3" height="7" fill="#f0b46c"/><ellipse cx="861" cy="274" rx="2" ry="1.500" fill="#6a4a30"/><ellipse cx="860.5" cy="289" rx="4.500" ry="3.500" fill="#f0b46c"/><rect x="854.500" y="285.5" width="3" height="7" fill="#f0b46c"/><ellipse cx="861" cy="289" rx="2" ry="1.500" fill="#6a4a30"/><ellipse cx="860.5" cy="303" rx="4.500" ry="3.500" fill="#f0b46c"/><rect x="854.500" y="299.5" width="3" height="7" fill="#f0b46c"/><ellipse cx="861" cy="303" rx="2" ry="1.500" fill="#6a4a30"/><ellipse cx="860.5" cy="321" rx="4.500" ry="3.500" fill="#f0b46c"/><rect x="854.500" y="317.5" width="3" height="7" fill="#f0b46c"/><ellipse cx="861" cy="321" rx="2" ry="1.500" fill="#6a4a30"/><ellipse cx="860.5" cy="335" rx="4.500" ry="3.500" fill="#f0b46c"/><rect x="854.500" y="331.5" width="3" height="7" fill="#f0b46c"/><ellipse cx="861" cy="335" rx="2" ry="1.500" fill="#6a4a30"/><ellipse cx="860.5" cy="348.5" rx="4.500" ry="3.500" fill="#f0b46c"/><rect x="854.500" y="345.0" width="3" height="7" fill="#f0b46c"/><ellipse cx="861" cy="348.5" rx="2" ry="1.500" fill="#6a4a30"/><rect x="881" y="252" width="10" height="7" rx="2" fill="#f0b46c"/><ellipse cx="886" cy="256" rx="2.500" ry="1.500" fill="#6a4a30"/><rect x="894" y="252" width="10" height="7" rx="2" fill="#f0b46c"/><ellipse cx="899" cy="256" rx="2.500" ry="1.500" fill="#6a4a30"/><path d="M877 252v8M907 252v8" stroke="#dcdcdc" stroke-width="1" fill="none" /><ellipse cx="905.5" cy="281" rx="3.200" ry="4" fill="#b8744e"/><ellipse cx="905.5" cy="293" rx="3.200" ry="4" fill="#b8744e"/><ellipse cx="905.5" cy="305" rx="3.200" ry="4" fill="#b8744e"/><rect x="901" y="316" width="7" height="10" rx="2.500" fill="#f0b46c"/><ellipse cx="905" cy="321" rx="1.500" ry="2.500" fill="#6a4a30"/><rect x="901" y="329" width="7" height="10" rx="2.500" fill="#f0b46c"/><ellipse cx="905" cy="334" rx="1.500" ry="2.500" fill="#6a4a30"/><rect x="858.0" y="256.0" width="15.0" height="4.0" fill="#fff" /><rect x="892.0" y="285.3" width="11.0" height="3.0" fill="#fff" /><rect x="891.0" y="344.0" width="14.0" height="4.0" fill="#fff" /><rect x="902.0" y="274.0" width="9.0" height="2.0" fill="#fff" /><rect x="902.0" y="298.0" width="7.0" height="2.0" fill="#fff" /><rect x="853.0" y="358.0" width="65.0" height="3.5" fill="#8c8c8c" /><rect x="875.7" y="358.0" width="3.8" height="26.0" fill="#8c8c8c" /><rect x="914.5" y="358.0" width="3.5" height="26.0" fill="#8c8c8c" /><rect x="875.7" y="381.0" width="24.3" height="3.5" fill="#8c8c8c" /><rect x="908.0" y="381.0" width="10.0" height="3.5" fill="#8c8c8c" /><rect x="882.0" y="365.0" width="29.0" height="5.0" fill="#fff" /><rect x="888.0" y="371.0" width="14.0" height="4.5" fill="#fff" /><rect x="918.0" y="361.5" width="13.0" height="22.5" fill="none" stroke="#dcdcdc" stroke-width="1" /><rect x="920.0" y="368.0" width="7.0" height="5.0" fill="#fff" /><rect x="927.0" y="361.0" width="4.0" height="23.0" fill="#bdbdbd" /><path d="M900 385v4a9 9 0 0 0 9 6v-10" stroke="#d0d0d0" stroke-width="1.1" fill="none" /><path d="M917 385a11 11 0 0 1 11 11" stroke="#d0d0d0" stroke-width="1.1" fill="none" /><rect x="854.0" y="387.5" width="24.0" height="4.0" fill="#fff" /><rect x="854.0" y="391.5" width="13.0" height="4.0" fill="#fff" /><rect x="876.0" y="391.0" width="3.5" height="19.0" fill="#8c8c8c" /><rect x="853.0" y="407.0" width="26.5" height="4.0" fill="#8c8c8c" /><path d="M879 387a4 4 0 0 1 4 4" stroke="#d0d0d0" stroke-width="1" fill="none" /><rect x="833.4" y="386.7" width="20.2" height="30.3" fill="#fff" /><rect x="845.5" y="417.0" width="8.1" height="115.0" fill="#fff" /><rect x="1098.7" y="385.0" width="20.3" height="29.6" fill="#fff" /><rect x="1098.7" y="414.0" width="8.3" height="120.0" fill="#fff" /><path d="M857.0 415.0L857.0 428.5" stroke="#f2e21c" stroke-width="1.8" /><path d="M858 415a14 14 0 0 1 14 14" stroke="#d0d0d0" stroke-width="1.1" fill="none" /><rect x="859.0" y="416.0" width="31.0" height="5.0" fill="#fff" /><rect x="873.0" y="428.0" width="4.0" height="63.0" fill="#8c8c8c" /><rect x="853.0" y="491.0" width="40.0" height="3.5" fill="#8c8c8c" /><rect x="853.5" y="427.0" width="3.5" height="4.0" fill="#8c8c8c" /><path d="M853.5 447.0L893.0 447.0" stroke="#e0e0e0" stroke-width="1.3" /><path d="M853.5 450.4L893.0 450.4" stroke="#e0e0e0" stroke-width="1.3" /><path d="M853.5 453.8L893.0 453.8" stroke="#e0e0e0" stroke-width="1.3" /><path d="M853.5 457.2L893.0 457.2" stroke="#e0e0e0" stroke-width="1.3" /><path d="M853.5 460.6L893.0 460.6" stroke="#e0e0e0" stroke-width="1.3" /><path d="M853.5 464.0L893.0 464.0" stroke="#8c8c8c" stroke-width="1.3" /><path d="M853.5 467.4L893.0 467.4" stroke="#e0e0e0" stroke-width="1.3" /><path d="M853.5 470.8L893.0 470.8" stroke="#e0e0e0" stroke-width="1.3" /><path d="M853.5 474.2L893.0 474.2" stroke="#e0e0e0" stroke-width="1.3" /><rect x="863.5" y="447.0" width="22.5" height="35.0" fill="none" stroke="#bdbdbd" stroke-width="1" /><rect x="856.0" y="498.0" width="35.0" height="32.0" fill="none" stroke="#dcdcdc" stroke-width="1.2" /><rect x="860.0" y="496.0" width="27.0" height="2.5" fill="#bdbdbd" /><rect x="870.0" y="510.0" width="11.5" height="4.5" fill="#fff" /><rect x="857.0" y="527.0" width="7.0" height="3.0" fill="#cfcfcf" /><rect x="883.0" y="527.0" width="7.0" height="3.0" fill="#cfcfcf" /><rect x="893.0" y="397.5" width="45.0" height="6.0" fill="#fff" /><rect x="893.0" y="397.5" width="4.5" height="137.0" fill="#fff" /><rect x="904.5" y="406.5" width="28.5" height="32.0" fill="none" stroke="#fff" stroke-width="1.3" /><rect x="906.3" y="408.3" width="24.9" height="28.4" fill="none" stroke="#9a9a9a" stroke-width="0.9" /><rect x="898.5" y="408.5" width="3.0" height="28.0" fill="none" stroke="#d8d8d8" stroke-width="0.9" /><rect x="899.3" y="409.5" width="1.4" height="26.0" fill="#9a9a9a" /><rect x="912.0" y="419.5" width="11.0" height="4.5" fill="#fff" /><path d="M897.5 442.5L934.0 442.5" stroke="#d0d0d0" stroke-width="1" /><path d="M897.5 445.0L934.0 445.0" stroke="#d0d0d0" stroke-width="1" /><path d="M897.5 447.5L934.0 447.5" stroke="#d0d0d0" stroke-width="1" /><rect x="904.5" y="450.2" width="28.5" height="32.0" fill="none" stroke="#fff" stroke-width="1.3" /><rect x="906.3" y="452.0" width="24.9" height="28.4" fill="none" stroke="#9a9a9a" stroke-width="0.9" /><rect x="898.5" y="452.2" width="3.0" height="28.0" fill="none" stroke="#d8d8d8" stroke-width="0.9" /><rect x="899.3" y="453.2" width="1.4" height="26.0" fill="#9a9a9a" /><rect x="912.0" y="463.2" width="11.0" height="4.5" fill="#fff" /><path d="M897.5 486.2L934.0 486.2" stroke="#d0d0d0" stroke-width="1" /><path d="M897.5 488.7L934.0 488.7" stroke="#d0d0d0" stroke-width="1" /><path d="M897.5 491.2L934.0 491.2" stroke="#d0d0d0" stroke-width="1" /><rect x="904.5" y="493.9" width="28.5" height="32.0" fill="none" stroke="#fff" stroke-width="1.3" /><rect x="906.3" y="495.7" width="24.9" height="28.4" fill="none" stroke="#9a9a9a" stroke-width="0.9" /><rect x="898.5" y="495.9" width="3.0" height="28.0" fill="none" stroke="#d8d8d8" stroke-width="0.9" /><rect x="899.3" y="496.9" width="1.4" height="26.0" fill="#9a9a9a" /><rect x="912.0" y="506.9" width="11.0" height="4.5" fill="#fff" /><rect x="934.6" y="400.6" width="4.0" height="14.0" fill="#8c8c8c" /><rect x="934.6" y="429.0" width="4.0" height="29.0" fill="#8c8c8c" /><rect x="934.6" y="473.6" width="4.0" height="28.4" fill="#8c8c8c" /><rect x="934.6" y="517.0" width="4.0" height="13.0" fill="#8c8c8c" /><path d="M936.6 403.0L936.6 530.0" stroke="#e6e6e6" stroke-width="0.8" /><rect x="1005.0" y="397.5" width="45.0" height="6.0" fill="#fff" /><rect x="1045.5" y="397.5" width="4.5" height="137.0" fill="#fff" /><rect x="1010.0" y="406.5" width="28.5" height="32.0" fill="none" stroke="#fff" stroke-width="1.3" /><rect x="1011.8" y="408.3" width="24.9" height="28.4" fill="none" stroke="#9a9a9a" stroke-width="0.9" /><rect x="1041.5" y="408.5" width="3.0" height="28.0" fill="none" stroke="#d8d8d8" stroke-width="0.9" /><rect x="1042.3" y="409.5" width="1.4" height="26.0" fill="#9a9a9a" /><rect x="1020.0" y="419.5" width="11.0" height="4.5" fill="#fff" /><path d="M1009.0 442.5L1045.5 442.5" stroke="#d0d0d0" stroke-width="1" /><path d="M1009.0 445.0L1045.5 445.0" stroke="#d0d0d0" stroke-width="1" /><path d="M1009.0 447.5L1045.5 447.5" stroke="#d0d0d0" stroke-width="1" /><rect x="1010.0" y="450.2" width="28.5" height="32.0" fill="none" stroke="#fff" stroke-width="1.3" /><rect x="1011.8" y="452.0" width="24.9" height="28.4" fill="none" stroke="#9a9a9a" stroke-width="0.9" /><rect x="1041.5" y="452.2" width="3.0" height="28.0" fill="none" stroke="#d8d8d8" stroke-width="0.9" /><rect x="1042.3" y="453.2" width="1.4" height="26.0" fill="#9a9a9a" /><rect x="1020.0" y="463.2" width="11.0" height="4.5" fill="#fff" /><path d="M1009.0 486.2L1045.5 486.2" stroke="#d0d0d0" stroke-width="1" /><path d="M1009.0 488.7L1045.5 488.7" stroke="#d0d0d0" stroke-width="1" /><path d="M1009.0 491.2L1045.5 491.2" stroke="#d0d0d0" stroke-width="1" /><rect x="1010.0" y="493.9" width="28.5" height="32.0" fill="none" stroke="#fff" stroke-width="1.3" /><rect x="1011.8" y="495.7" width="24.9" height="28.4" fill="none" stroke="#9a9a9a" stroke-width="0.9" /><rect x="1041.5" y="495.9" width="3.0" height="28.0" fill="none" stroke="#d8d8d8" stroke-width="0.9" /><rect x="1042.3" y="496.9" width="1.4" height="26.0" fill="#9a9a9a" /><rect x="1020.0" y="506.9" width="11.0" height="4.5" fill="#fff" /><rect x="1004.4" y="400.6" width="4.0" height="14.0" fill="#8c8c8c" /><rect x="1004.4" y="429.0" width="4.0" height="29.0" fill="#8c8c8c" /><rect x="1004.4" y="473.6" width="4.0" height="28.4" fill="#8c8c8c" /><rect x="1004.4" y="517.0" width="4.0" height="13.0" fill="#8c8c8c" /><path d="M1006.4 403.0L1006.4 530.0" stroke="#e6e6e6" stroke-width="0.8" /><rect x="882.0" y="530.0" width="58.0" height="5.0" fill="#fff" /><rect x="1004.0" y="530.0" width="48.0" height="5.0" fill="#fff" /><rect x="1068.7" y="530.8" width="29.3" height="4.0" fill="#fff" /><rect x="854.0" y="530.0" width="12.0" height="5.0" fill="#fff" /><rect x="858.0" y="528.0" width="24.0" height="1.5" fill="#cfcfcf" /><rect x="947.9" y="391.8" width="48.3" height="3.2" fill="#00fa00" /><rect x="947.0" y="534.0" width="47.6" height="3.2" fill="#00fa00" /><path d="M948 393.5H940V400M996 393.5H1003V400M947 535.500H940V529M994.6 535.500H1003V529" stroke="#ff1010" stroke-width="1.2" fill="none" /><rect x="938.5" y="400.0" width="3.0" height="6.0" fill="none" stroke="#f2e21c" stroke-width="1.2" /><rect x="1001.0" y="400.0" width="3.0" height="6.0" fill="none" stroke="#f2e21c" stroke-width="1.2" /><rect x="938.5" y="524.0" width="3.0" height="5.0" fill="none" stroke="#f2e21c" stroke-width="1.2" /><rect x="1001.0" y="524.0" width="3.0" height="5.0" fill="none" stroke="#f2e21c" stroke-width="1.2" /><g transform="translate(990.5 312) rotate(20) scale(1.10)" stroke="#ff1010" fill="none" stroke-width="1.500" stroke-linejoin="round"><path d="M-4 -1c0-3 2-4.500 4-3.500c2-1.500 4.500 0 4 2.500c1 2-1 3.500-2.500 3l-1 4.500h-2.500l-.5-3.500c-2.500 .5-5-.5-5.500-3z"/><circle cx="-1.500" cy="-1.500" r="1.300"/><circle cx="2" cy="-1.800" r="1.100"/><path d="M-2 1.500l3 1M0 5l1.500-1.500"/></g><g transform="translate(992 356) rotate(200) scale(1.20)" stroke="#ff1010" fill="none" stroke-width="1.500" stroke-linejoin="round"><path d="M-4 -1c0-3 2-4.500 4-3.500c2-1.500 4.500 0 4 2.500c1 2-1 3.500-2.500 3l-1 4.500h-2.500l-.5-3.500c-2.500 .5-5-.5-5.500-3z"/><circle cx="-1.500" cy="-1.500" r="1.300"/><circle cx="2" cy="-1.800" r="1.100"/><path d="M-2 1.500l3 1M0 5l1.500-1.500"/></g><g transform="translate(947 372) rotate(90) scale(1.30)" stroke="#ff1010" fill="none" stroke-width="1.500" stroke-linejoin="round"><path d="M-4 -1c0-3 2-4.500 4-3.500c2-1.500 4.500 0 4 2.500c1 2-1 3.500-2.500 3l-1 4.500h-2.500l-.5-3.500c-2.500 .5-5-.5-5.500-3z"/><circle cx="-1.500" cy="-1.500" r="1.300"/><circle cx="2" cy="-1.800" r="1.100"/><path d="M-2 1.500l3 1M0 5l1.500-1.500"/></g><g transform="translate(975 381) rotate(300) scale(1.10)" stroke="#ff1010" fill="none" stroke-width="1.500" stroke-linejoin="round"><path d="M-4 -1c0-3 2-4.500 4-3.500c2-1.500 4.500 0 4 2.500c1 2-1 3.500-2.500 3l-1 4.500h-2.500l-.5-3.500c-2.500 .5-5-.5-5.500-3z"/><circle cx="-1.500" cy="-1.500" r="1.300"/><circle cx="2" cy="-1.800" r="1.100"/><path d="M-2 1.500l3 1M0 5l1.500-1.500"/></g><g transform="translate(998 419) rotate(40) scale(1.00)" stroke="#ff1010" fill="none" stroke-width="1.500" stroke-linejoin="round"><path d="M-4 -1c0-3 2-4.500 4-3.500c2-1.500 4.500 0 4 2.500c1 2-1 3.500-2.500 3l-1 4.500h-2.500l-.5-3.500c-2.500 .5-5-.5-5.500-3z"/><circle cx="-1.500" cy="-1.500" r="1.300"/><circle cx="2" cy="-1.800" r="1.100"/><path d="M-2 1.500l3 1M0 5l1.500-1.500"/></g><g transform="translate(956.5 430) rotate(120) scale(1.20)" stroke="#ff1010" fill="none" stroke-width="1.500" stroke-linejoin="round"><path d="M-4 -1c0-3 2-4.500 4-3.500c2-1.500 4.500 0 4 2.500c1 2-1 3.500-2.500 3l-1 4.500h-2.500l-.5-3.500c-2.500 .5-5-.5-5.500-3z"/><circle cx="-1.500" cy="-1.500" r="1.300"/><circle cx="2" cy="-1.800" r="1.100"/><path d="M-2 1.500l3 1M0 5l1.500-1.500"/></g><g transform="translate(996 443) rotate(220) scale(1.10)" stroke="#ff1010" fill="none" stroke-width="1.500" stroke-linejoin="round"><path d="M-4 -1c0-3 2-4.500 4-3.500c2-1.500 4.500 0 4 2.500c1 2-1 3.500-2.500 3l-1 4.500h-2.500l-.5-3.500c-2.500 .5-5-.5-5.500-3z"/><circle cx="-1.500" cy="-1.500" r="1.300"/><circle cx="2" cy="-1.800" r="1.100"/><path d="M-2 1.500l3 1M0 5l1.500-1.500"/></g><g transform="translate(955 453) rotate(320) scale(1.10)" stroke="#ff1010" fill="none" stroke-width="1.500" stroke-linejoin="round"><path d="M-4 -1c0-3 2-4.500 4-3.500c2-1.500 4.500 0 4 2.500c1 2-1 3.500-2.500 3l-1 4.500h-2.500l-.5-3.500c-2.500 .5-5-.5-5.500-3z"/><circle cx="-1.500" cy="-1.500" r="1.300"/><circle cx="2" cy="-1.800" r="1.100"/><path d="M-2 1.500l3 1M0 5l1.500-1.500"/></g><g transform="translate(993 485) rotate(60) scale(1.20)" stroke="#ff1010" fill="none" stroke-width="1.500" stroke-linejoin="round"><path d="M-4 -1c0-3 2-4.500 4-3.500c2-1.500 4.500 0 4 2.500c1 2-1 3.500-2.500 3l-1 4.500h-2.500l-.5-3.500c-2.500 .5-5-.5-5.500-3z"/><circle cx="-1.500" cy="-1.500" r="1.300"/><circle cx="2" cy="-1.800" r="1.100"/><path d="M-2 1.500l3 1M0 5l1.500-1.500"/></g><g transform="translate(956 501) rotate(150) scale(1.10)" stroke="#ff1010" fill="none" stroke-width="1.500" stroke-linejoin="round"><path d="M-4 -1c0-3 2-4.500 4-3.500c2-1.500 4.500 0 4 2.500c1 2-1 3.500-2.500 3l-1 4.500h-2.500l-.5-3.500c-2.500 .5-5-.5-5.500-3z"/><circle cx="-1.500" cy="-1.500" r="1.300"/><circle cx="2" cy="-1.800" r="1.100"/><path d="M-2 1.500l3 1M0 5l1.500-1.500"/></g><g transform="translate(950 514) rotate(250) scale(1.00)" stroke="#ff1010" fill="none" stroke-width="1.500" stroke-linejoin="round"><path d="M-4 -1c0-3 2-4.500 4-3.500c2-1.500 4.500 0 4 2.500c1 2-1 3.500-2.500 3l-1 4.500h-2.500l-.5-3.500c-2.500 .5-5-.5-5.500-3z"/><circle cx="-1.500" cy="-1.500" r="1.300"/><circle cx="2" cy="-1.800" r="1.100"/><path d="M-2 1.500l3 1M0 5l1.500-1.500"/></g><g transform="translate(995 524) rotate(10) scale(1.20)" stroke="#ff1010" fill="none" stroke-width="1.500" stroke-linejoin="round"><path d="M-4 -1c0-3 2-4.500 4-3.500c2-1.500 4.500 0 4 2.500c1 2-1 3.500-2.500 3l-1 4.500h-2.500l-.5-3.500c-2.500 .5-5-.5-5.500-3z"/><circle cx="-1.500" cy="-1.500" r="1.300"/><circle cx="2" cy="-1.800" r="1.100"/><path d="M-2 1.500l3 1M0 5l1.500-1.500"/></g><g transform="translate(968.5 556) rotate(0) scale(0.90)" stroke="#ff1010" fill="none" stroke-width="1.500" stroke-linejoin="round"><path d="M-4 -1c0-3 2-4.500 4-3.500c2-1.500 4.500 0 4 2.500c1 2-1 3.500-2.500 3l-1 4.500h-2.500l-.5-3.500c-2.500 .5-5-.5-5.500-3z"/><circle cx="-1.500" cy="-1.500" r="1.300"/><circle cx="2" cy="-1.800" r="1.100"/><path d="M-2 1.500l3 1M0 5l1.500-1.500"/></g><g transform="translate(882 701) rotate(0) scale(0.90)" stroke="#ff1010" fill="none" stroke-width="1.500" stroke-linejoin="round"><path d="M-4 -1c0-3 2-4.500 4-3.500c2-1.500 4.500 0 4 2.500c1 2-1 3.500-2.500 3l-1 4.500h-2.500l-.5-3.500c-2.500 .5-5-.5-5.500-3z"/><circle cx="-1.500" cy="-1.500" r="1.300"/><circle cx="2" cy="-1.800" r="1.100"/><path d="M-2 1.500l3 1M0 5l1.500-1.500"/></g><rect x="1011.0" y="248.0" width="4.0" height="137.0" fill="url(#hat)" /><path d="M1011 248V385M1015 248V385" stroke="#fff" stroke-width="0.7" fill="none" /><rect x="1016.0" y="358.0" width="86.0" height="4.5" fill="#fff" /><rect x="1098.0" y="358.0" width="4.5" height="28.0" fill="#fff" /><rect x="1016.5" y="362.5" width="6.5" height="20.5" fill="none" stroke="#bdbdbd" stroke-width="1" /><path d="M1016.5 362.500L1023 383M1023 362.500L1016.5 383" stroke="#9a9a9a" stroke-width="0.8" fill="none" /><rect x="1024.0" y="363.0" width="4.0" height="18.0" fill="#fff" /><rect x="1028.0" y="368.0" width="13.0" height="9.0" fill="#fff" /><rect x="1024.0" y="377.0" width="16.0" height="4.0" fill="#e8e8e8" /><path d="M1043.8 365.0L1056.5 365.0" stroke="#f2e21c" stroke-width="1.6" /><path d="M1056.5 366a13 13 0 0 1-13 13" stroke="#d0d0d0" stroke-width="1.1" fill="none" /><rect x="1054.8" y="377.7" width="31.2" height="4.3" fill="#fff" /><rect x="1064.0" y="382.0" width="12.0" height="4.0" fill="#fff" /><rect x="1011.0" y="383.0" width="13.0" height="3.0" fill="#c4c4c4" /><path d="M1016 397a11 11 0 0 1 11-11" stroke="#d0d0d0" stroke-width="1.1" fill="none" /><rect x="1050.0" y="397.5" width="48.7" height="6.0" fill="#fff" /><rect x="1047.0" y="397.5" width="3.5" height="136.5" fill="#fff" /><rect x="1052.0" y="404.7" width="35.0" height="35.3" fill="none" stroke="#8c8c8c" stroke-width="1.3" /><rect x="1064.8" y="419.5" width="10.2" height="4.5" fill="#fff" /><rect x="1091.0" y="409.0" width="3.0" height="28.0" fill="none" stroke="#cfcfcf" stroke-width="0.9" /><rect x="1050.0" y="445.0" width="48.7" height="3.5" fill="#fff" /><rect x="1072.0" y="448.0" width="4.0" height="62.0" fill="#fff" /><rect x="1073.2" y="449.0" width="1.6" height="60.0" fill="#212830" /><path d="M1050.5 466.6L1098.0 466.6" stroke="#e0e0e0" stroke-width="1.3" /><path d="M1050.5 469.9L1098.0 469.9" stroke="#e0e0e0" stroke-width="1.3" /><path d="M1050.5 473.2L1098.0 473.2" stroke="#e0e0e0" stroke-width="1.3" /><path d="M1050.5 476.5L1098.0 476.5" stroke="#e0e0e0" stroke-width="1.3" /><path d="M1050.5 479.8L1098.0 479.8" stroke="#e0e0e0" stroke-width="1.3" /><path d="M1050.5 483.1L1098.0 483.1" stroke="#8c8c8c" stroke-width="1.3" /><path d="M1050.5 486.4L1098.0 486.4" stroke="#e0e0e0" stroke-width="1.3" /><path d="M1050.5 489.7L1098.0 489.7" stroke="#e0e0e0" stroke-width="1.3" /><path d="M1050.5 493.0L1098.0 493.0" stroke="#e0e0e0" stroke-width="1.3" /><rect x="1061.0" y="457.0" width="26.0" height="36.0" fill="none" stroke="#a8a8a8" stroke-width="1" /><path d="M1072 510h8l3 6h8" stroke="#e0e0e0" stroke-width="1.1" fill="none" /><rect x="1057.7" y="518.0" width="31.3" height="5.0" fill="#fff" /><path d="M1094.5 511.0L1094.5 525.0" stroke="#f2e21c" stroke-width="1.8" /><path d="M1083 510c2 4 3 8 10 14" stroke="#cfcfcf" stroke-width="1" fill="none" /><path d="M658.0 530.0L733.0 530.0" stroke="#fff" stroke-width="2" /><path d="M1219.5 528.0L1285.0 528.0" stroke="#fff" stroke-width="2" /><path d="M760.0 530.0L796.0 530.0" stroke="#dcdcdc" stroke-width="1.3" /><path d="M796.0 524.0L796.0 530.0" stroke="#9a9a9a" stroke-width="1" /><path d="M1143.0 530.0L1193.0 530.0" stroke="#dcdcdc" stroke-width="1.3" /><path d="M1147.0 524.0L1147.0 530.0" stroke="#9a9a9a" stroke-width="1" /><path d="M649.7 534.0L649.7 782.0" stroke="#fff" stroke-width="1.8" /><path d="M1302.8 534.0L1302.8 781.0" stroke="#fff" stroke-width="1.8" /><path d="M648.8 782.0L733.0 782.0" stroke="#fff" stroke-width="1.8" /><path d="M1212.0 780.0L1303.7 780.0" stroke="#fff" stroke-width="1.8" /><path d="M657.6 533.0L733.0 765.0" stroke="#dcdcdc" stroke-width="1.3" /><path d="M741.5 533.0L649.5 780.0" stroke="#dcdcdc" stroke-width="1.3" /><path d="M1211.0 533.0L1295.5 779.0" stroke="#dcdcdc" stroke-width="1.3" /><path d="M1295.5 533.0L1211.0 766.0" stroke="#dcdcdc" stroke-width="1.3" /><path d="M733.6 534.0L733.6 768.0" stroke="#8c8c8c" stroke-width="1" /><path d="M742.0 534.0L742.0 768.0" stroke="#fff" stroke-width="1.5" /><path d="M748.4 534.0L748.4 768.0" stroke="#fff" stroke-width="1.5" /><path d="M758.7 534.0L758.7 768.0" stroke="#8c8c8c" stroke-width="1" /><path d="M1193.8 534.0L1193.8 768.0" stroke="#8c8c8c" stroke-width="1" /><path d="M1202.5 534.0L1202.5 768.0" stroke="#fff" stroke-width="1.5" /><path d="M1209.3 534.0L1209.3 768.0" stroke="#fff" stroke-width="1.5" /><path d="M1218.9 534.0L1218.9 768.0" stroke="#8c8c8c" stroke-width="1" /><path d="M742.0 568.9L748.4 568.9" stroke="#dcdcdc" stroke-width="1.2" /><path d="M742.0 697.5L748.4 697.5" stroke="#dcdcdc" stroke-width="1.2" /><path d="M742.0 733.0L748.4 733.0" stroke="#dcdcdc" stroke-width="1.2" /><path d="M1202.5 539.0L1209.3 539.0" stroke="#dcdcdc" stroke-width="1.2" /><path d="M1202.5 568.9L1209.3 568.9" stroke="#dcdcdc" stroke-width="1.2" /><path d="M1202.5 700.7L1209.3 700.7" stroke="#dcdcdc" stroke-width="1.2" /><path d="M1202.5 737.0L1209.3 737.0" stroke="#dcdcdc" stroke-width="1.2" /><path d="M742 604.600H837.5V636" stroke="#dcdcdc" stroke-width="1.8" fill="none" /><path d="M1208 604.600H1115V636" stroke="#dcdcdc" stroke-width="1.8" fill="none" /><path d="M800.5 515.0L800.5 530.0" stroke="#f2e21c" stroke-width="1.6" /><path d="M830.6 515.0L830.6 530.0" stroke="#f2e21c" stroke-width="1.6" /><path d="M800.5 515.500A15 15 0 0 1 815.5 530.500A15 15 0 0 1 830.600 515.500" stroke="#c4c4c4" stroke-width="1.1" fill="none" /><path d="M1112.6 515.0L1112.6 530.0" stroke="#f2e21c" stroke-width="1.6" /><path d="M1142.6 515.0L1142.6 530.0" stroke="#f2e21c" stroke-width="1.6" /><path d="M1112.6 515.500A15 15 0 0 1 1127.6 530.500A15 15 0 0 1 1142.600 515.500" stroke="#c4c4c4" stroke-width="1.1" fill="none" /><path d="M831.0 515.0L831.0 530.0" stroke="#f2e21c" stroke-width="1.4" /><path d="M834 533v3.500h21v-3.500" stroke="#f2e21c" stroke-width="1.3" fill="none" /><rect x="825.0" y="540.0" width="40.0" height="4.5" fill="#fff" /><path d="M844.5 533v11" stroke="#ff1010" stroke-width="1.2" fill="none" /><circle cx="844.5" cy="534" r="1.600" fill="#ff1010"/><path d="M1088 533v3.500h21v-3.500" stroke="#f2e21c" stroke-width="1.3" fill="none" /><rect x="1078.0" y="541.0" width="40.0" height="4.5" fill="#fff" /><path d="M1099.5 533v11" stroke="#ff1010" stroke-width="1.2" fill="none" /><circle cx="1099.5" cy="534.500" r="1.600" fill="#ff1010"/><path d="M892 574.600V545.500a2 2 0 0 1 2-2h2a2 2 0 0 1 2 2V569.500H924.500V545.500a2 2 0 0 1 2-2h2a2 2 0 0 1 2 2V574.600z" stroke="#f2e21c" stroke-width="1.3" fill="none" stroke-dasharray="3 1.500"/><path d="M898 560H924.500" stroke="#e8b060" stroke-width="1.3" fill="none" stroke-dasharray="3 1.500"/><rect x="888.9" y="576.0" width="47.1" height="5.0" fill="#fff" /><rect x="900.0" y="581.0" width="23.0" height="5.5" fill="#fff" /><rect x="905.8" y="575.5" width="2.9" height="5.1" fill="#212830" /><path d="M1008.5 544H1022.500V559.500H1070V574.600H1008.500z M1013.5 546v23.500H1070" stroke="#d4d4d4" stroke-width="1.2" fill="none" /><rect x="1009.0" y="534.0" width="6.0" height="9.0" fill="#10e6f0" /><rect x="1047.0" y="542.0" width="6.0" height="10.0" fill="#10e6f0" /><path d="M1052.5 532.0L1052.5 562.0" stroke="#8c8c8c" stroke-width="1.5" /><rect x="1026.0" y="549.5" width="8.0" height="9.5" fill="none" stroke="#ff1010" stroke-width="1.4" /><circle cx="1041.5" cy="554.500" r="4.800" fill="#ff1010"/><path d="M1030 548l-2-2M1040 560l2 4" stroke="#ff1010" stroke-width="1.2" fill="none" /><rect x="1031.0" y="575.3" width="27.0" height="5.0" fill="#fff" /><rect x="1033.0" y="581.5" width="23.0" height="4.5" fill="#fff" /><rect x="1019.0" y="535.5" width="21.0" height="3.0" fill="#fff" /><path d="M1054.5 531.0L1054.5 545.0" stroke="#f2e21c" stroke-width="1.5" /><path d="M1055 545a13 13 0 0 0 13-13" stroke="#bdbdbd" stroke-width="1.1" fill="none" /><g transform="translate(1024 577.5) rotate(45) scale(1.00)" stroke="#ff1010" fill="none" stroke-width="1.500" stroke-linejoin="round"><path d="M-4 -1c0-3 2-4.500 4-3.500c2-1.500 4.500 0 4 2.500c1 2-1 3.500-2.500 3l-1 4.500h-2.500l-.5-3.500c-2.500 .5-5-.5-5.500-3z"/><circle cx="-1.500" cy="-1.500" r="1.300"/><circle cx="2" cy="-1.800" r="1.100"/><path d="M-2 1.500l3 1M0 5l1.500-1.500"/></g><rect x="718.0" y="584.4" width="20.0" height="4.1" fill="#fff" /><rect x="721.0" y="590.0" width="14.0" height="3.5" fill="#fff" /><rect x="769.0" y="593.4" width="39.0" height="4.1" fill="#fff" /><rect x="764.8" y="639.3" width="19.2" height="3.7" fill="#fff" /><rect x="763.8" y="643.5" width="21.2" height="3.5" fill="#fff" /><rect x="810.0" y="641.0" width="21.0" height="4.0" fill="#fff" /><rect x="809.0" y="645.5" width="22.0" height="4.0" fill="#fff" /><rect x="857.5" y="632.0" width="18.5" height="3.5" fill="#fff" /><rect x="857.0" y="636.0" width="20.0" height="4.0" fill="#fff" /><rect x="718.0" y="715.0" width="20.0" height="4.0" fill="#fff" /><rect x="721.0" y="719.5" width="14.0" height="3.5" fill="#fff" /><rect x="1215.0" y="553.3" width="21.0" height="4.0" fill="#fff" /><rect x="1218.0" y="558.0" width="14.0" height="3.5" fill="#fff" /><rect x="1143.0" y="591.0" width="39.0" height="4.5" fill="#fff" /><rect x="1073.8" y="639.0" width="19.2" height="3.5" fill="#fff" /><rect x="1072.8" y="643.0" width="21.2" height="4.0" fill="#fff" /><rect x="1125.0" y="639.0" width="19.0" height="3.5" fill="#fff" /><rect x="1124.0" y="643.0" width="21.0" height="4.0" fill="#fff" /><rect x="1168.0" y="640.0" width="19.0" height="4.0" fill="#fff" /><rect x="1167.0" y="644.5" width="21.0" height="3.5" fill="#fff" /><rect x="1214.0" y="729.5" width="20.0" height="4.0" fill="#fff" /><rect x="1217.0" y="734.5" width="14.0" height="3.0" fill="#fff" /><rect x="879.0" y="706.0" width="40.0" height="4.5" fill="#fff" /><rect x="1032.0" y="706.0" width="40.0" height="4.5" fill="#fff" /><rect x="865.0" y="718.5" width="19.0" height="3.0" fill="#fff" /><rect x="864.0" y="722.5" width="22.0" height="4.0" fill="#fff" /><rect x="913.7" y="718.0" width="20.3" height="8.0" fill="#fff" /><rect x="1018.0" y="718.0" width="21.0" height="9.0" fill="#fff" /><rect x="1068.0" y="718.5" width="19.0" height="3.5" fill="#fff" /><rect x="1067.0" y="722.5" width="21.0" height="4.0" fill="#fff" /><rect x="842.0" y="849.7" width="40.0" height="4.3" fill="#fff" /><rect x="1069.9" y="851.0" width="40.1" height="4.5" fill="#fff" /><rect x="982.7" y="944.0" width="41.3" height="3.5" fill="#fff" /><rect x="1015.0" y="695.0" width="10.0" height="5.0" fill="#fff" /><path d="M740 587h7M788.5 597.500v7M762 652H775V649M831 652.500H820V649.500M857 651.500H863V641.500M740 718h7" stroke="#ff1010" stroke-width="1.3" fill="none" /><circle cx="740" cy="587" r="1.700" fill="#ff1010"/><circle cx="762" cy="652" r="1.700" fill="#ff1010"/><circle cx="740" cy="718" r="1.700" fill="#ff1010"/><circle cx="1190" cy="652.5" r="1.700" fill="#ff1010"/><circle cx="1120.5" cy="641" r="1.700" fill="#ff1010"/><circle cx="1162.5" cy="604" r="1.700" fill="#ff1010"/><circle cx="1216" cy="553.5" r="1.700" fill="#ff1010"/><circle cx="1213" cy="731.5" r="1.700" fill="#ff1010"/><path d="M1201 555h14M1162.5 596v8M1190 652.500H1177V649.500M1120 641h5M1096 652.500H1084V649.500M1203 731.500h10" stroke="#ff1010" stroke-width="1.3" fill="none" /><path d="M900 710.5v6M1053 710.5v6M875 728.500V731H889M911 731H925V728M1028 728.500V731H1042M1064 731H1078V728M882 853h8M1062 853.500h8M1003.7 940v4" stroke="#ff1010" stroke-width="1.3" fill="none" /><circle cx="900" cy="716" r="1.600" fill="#ff1010"/><circle cx="1053" cy="716" r="1.600" fill="#ff1010"/><circle cx="911" cy="731" r="1.600" fill="#ff1010"/><circle cx="1064" cy="731" r="1.600" fill="#ff1010"/><circle cx="889" cy="853" r="1.600" fill="#ff1010"/><circle cx="1063" cy="853.5" r="1.600" fill="#ff1010"/><circle cx="1003.7" cy="940" r="1.600" fill="#ff1010"/><path d="M832.0 642.0L832.0 664.0" stroke="#f2e21c" stroke-width="1.2" /><path d="M855.8 642.0L855.8 664.0" stroke="#f2e21c" stroke-width="1.2" /><path d="M1096.3 642.0L1096.3 664.0" stroke="#f2e21c" stroke-width="1.2" /><path d="M1120.3 642.0L1120.3 664.0" stroke="#f2e21c" stroke-width="1.2" /><path d="M760 645h2v17h-2M1193 645h-2v17h2" stroke="#f2e21c" stroke-width="1.3" fill="none" /><path d="M888 738V720a3 3 0 0 1 3-3.500H908a3 3 0 0 1 3 3.500V738" stroke="#f2e21c" stroke-width="1.1" fill="none" /><path d="M1041.3 738V720a3 3 0 0 1 3-3.500H1061.3a3 3 0 0 1 3 3.500V738" stroke="#f2e21c" stroke-width="1.1" fill="none" /><path d="M912 719.500H959V721H992V719.500H1041" stroke="#dcdcdc" stroke-width="1.6" fill="none" /><path d="M936 723l-6.500 10h3.500v12h6v-12h3.500z" stroke="#fff" stroke-width="0" fill="#fff" /><rect x="940.0" y="735.0" width="4.0" height="5.0" fill="#fff" /><path d="M1008.5 692h6.500v13h3.500l-6.800 9.500-6.700-9.500h3.500z" stroke="#fff" stroke-width="0" fill="#fff" /><rect x="961.2" y="736.0" width="29.4" height="12.6" fill="none" stroke="#d4d4d4" stroke-width="1.2" /><rect x="963.5" y="738.0" width="18.5" height="3.5" fill="#fff" /><rect x="963.5" y="743.0" width="22.5" height="4.0" fill="#fff" /><ellipse cx="973" cy="730.5" rx="3.800" ry="5" fill="none" stroke="#ff1010" stroke-width="1.300"/><circle cx="985" cy="731.500" r="4.200" fill="none" stroke="#ff1010" stroke-width="1.300"/><path d="M980 729l5 9 3-7M979 726h9" fill="none" stroke="#ff1010" stroke-width="1.300"/><path d="M897 738.500v4h-13.500a14 14 0 0 0 13.500 14.500V774" stroke="#dcdcdc" stroke-width="1.3" fill="none" /><path d="M1052 738.500v4h13.500a14 14 0 0 1-13.500 14.500V774" stroke="#dcdcdc" stroke-width="1.3" fill="none" /><path d="M760.0 781.0L889.4 781.0" stroke="#d8d8d8" stroke-width="2" /><path d="M1062.7 781.0L1193.0 781.0" stroke="#d8d8d8" stroke-width="2" /><path d="M909.5 776.5L1042.8 776.5" stroke="#dcdcdc" stroke-width="1.1" /><path d="M909.5 781.0L1042.8 781.0" stroke="#dcdcdc" stroke-width="1.1" /><path d="M909.5 783.6L1042.8 783.6" stroke="#dcdcdc" stroke-width="1.1" /><rect x="732.8" y="767.7" width="27.2" height="18.3" fill="#fff" /><rect x="740.0" y="786.0" width="20.0" height="7.4" fill="#fff" /><rect x="1193.0" y="767.7" width="26.5" height="18.3" fill="#fff" /><rect x="1193.0" y="786.0" width="19.0" height="7.4" fill="#fff" /><path d="M887.5 783V940.500H1064.600V783M891 783V938H1062.700" stroke="#f2e21c" stroke-width="1.4" fill="none" /><path d="M899 943H1052" stroke="#f2e21c" stroke-width="1.2" fill="none" /><path d="M909 793V920H1043.300V793" stroke="#dcdcdc" stroke-width="1.2" fill="none" /><rect x="638.2" y="514.0" width="19.8" height="20.0" fill="#fff" /><rect x="732.8" y="514.0" width="27.2" height="20.0" fill="#fff" /><rect x="638.2" y="643.0" width="19.8" height="20.0" fill="#fff" /><rect x="732.8" y="643.0" width="27.2" height="20.0" fill="#fff" /><rect x="1193.0" y="514.0" width="26.5" height="20.0" fill="#fff" /><rect x="1284.8" y="514.0" width="20.2" height="20.0" fill="#fff" /><rect x="1193.0" y="643.0" width="26.5" height="20.0" fill="#fff" /><rect x="1284.8" y="643.0" width="20.2" height="20.0" fill="#fff" /><rect x="833.8" y="514.0" width="20.2" height="21.0" fill="#fff" /><rect x="1097.0" y="514.0" width="13.0" height="21.0" fill="#fff" /><rect x="833.3" y="639.3" width="21.1" height="26.7" fill="#fff" /><rect x="1097.9" y="639.3" width="20.8" height="26.7" fill="#fff" /><rect x="889.4" y="718.3" width="20.1" height="19.7" fill="#fff" /><rect x="1042.8" y="718.3" width="19.9" height="19.7" fill="#fff" /><rect x="833.3" y="760.0" width="21.1" height="33.5" fill="#fff" /><rect x="1098.0" y="760.0" width="21.0" height="33.5" fill="#fff" /><rect x="889.4" y="773.8" width="20.1" height="19.7" fill="#fff" /><rect x="1042.8" y="773.8" width="19.9" height="19.7" fill="#fff" /><rect x="890.0" y="920.0" width="19.5" height="20.0" fill="#fff" /><rect x="1042.4" y="920.0" width="19.6" height="20.0" fill="#fff" /><path d="M1864.3 181.0L1864.3 763.0" stroke="#fff" stroke-width="1.6" /><path d="M1874.0 510.7L1908.0 510.7" stroke="#fff" stroke-width="1.8" /><path d="M1864.0 762.7L1908.0 762.7" stroke="#fff" stroke-width="1.8" /><path d="M1865.0 514.0L1908.0 639.0" stroke="#dcdcdc" stroke-width="1.2" /><path d="M1908.0 642.0L1865.0 759.0" stroke="#dcdcdc" stroke-width="1.2" /><rect x="1854.3" y="494.5" width="19.7" height="19.8" fill="#fff" /><rect x="1854.3" y="623.8" width="19.7" height="19.7" fill="#fff" /><g transform="translate(972 194)"><path d="M-6.500 0L0 -6.500L6.500 0L0 6.500z" fill="none" stroke="#12e024" stroke-width="1.1"/><circle r="4" fill="none" stroke="#12e024" stroke-width="1.2"/><rect x="-1.800" y="-1" width="3.600" height="3.600" fill="#a8a8a8"/><rect x="-1" y="-2.500" width="2" height="2" fill="#a8a8a8"/></g><g transform="translate(844 301)"><path d="M-6.500 0L0 -6.500L6.500 0L0 6.500z" fill="none" stroke="#12e024" stroke-width="1.1"/><circle r="4" fill="none" stroke="#12e024" stroke-width="1.2"/><rect x="-1.800" y="-1" width="3.600" height="3.600" fill="#a8a8a8"/><rect x="-1" y="-2.500" width="2" height="2" fill="#a8a8a8"/></g><g transform="translate(1025 301)"><path d="M-6.500 0L0 -6.500L6.500 0L0 6.500z" fill="none" stroke="#12e024" stroke-width="1.1"/><circle r="4" fill="none" stroke="#12e024" stroke-width="1.2"/><rect x="-1.800" y="-1" width="3.600" height="3.600" fill="#a8a8a8"/><rect x="-1" y="-2.500" width="2" height="2" fill="#a8a8a8"/></g><g transform="translate(733.3 545.6)"><path d="M-6.500 0L0 -6.500L6.500 0L0 6.500z" fill="none" stroke="#12e024" stroke-width="1.1"/><circle r="4" fill="none" stroke="#12e024" stroke-width="1.2"/><rect x="-1.800" y="-1" width="3.600" height="3.600" fill="#a8a8a8"/><rect x="-1" y="-2.500" width="2" height="2" fill="#a8a8a8"/></g><g transform="translate(1218.4 545)"><path d="M-6.500 0L0 -6.500L6.500 0L0 6.500z" fill="none" stroke="#12e024" stroke-width="1.1"/><circle r="4" fill="none" stroke="#12e024" stroke-width="1.2"/><rect x="-1.800" y="-1" width="3.600" height="3.600" fill="#a8a8a8"/><rect x="-1" y="-2.500" width="2" height="2" fill="#a8a8a8"/></g><g transform="translate(733.3 695.6)"><path d="M-6.500 0L0 -6.500L6.500 0L0 6.500z" fill="none" stroke="#12e024" stroke-width="1.1"/><circle r="4" fill="none" stroke="#12e024" stroke-width="1.2"/><rect x="-1.800" y="-1" width="3.600" height="3.600" fill="#a8a8a8"/><rect x="-1" y="-2.500" width="2" height="2" fill="#a8a8a8"/></g><g transform="translate(1218.2 695.2)"><path d="M-6.500 0L0 -6.500L6.500 0L0 6.500z" fill="none" stroke="#12e024" stroke-width="1.1"/><circle r="4" fill="none" stroke="#12e024" stroke-width="1.2"/><rect x="-1.800" y="-1" width="3.600" height="3.600" fill="#a8a8a8"/><rect x="-1" y="-2.500" width="2" height="2" fill="#a8a8a8"/></g><g transform="translate(972 948.4)"><path d="M-6.500 0L0 -6.500L6.500 0L0 6.500z" fill="none" stroke="#12e024" stroke-width="1.1"/><circle r="4" fill="none" stroke="#12e024" stroke-width="1.2"/><rect x="-1.800" y="-1" width="3.600" height="3.600" fill="#a8a8a8"/><rect x="-1" y="-2.500" width="2" height="2" fill="#a8a8a8"/></g><text x="952.8" y="332.2" font-size="7.5" textLength="37.7" lengthAdjust="spacingAndGlyphs" fill="#f2f2f2">CORRIDOR</text><text x="954.8" y="464.3" font-size="7.5" textLength="39.2" lengthAdjust="spacingAndGlyphs" fill="#f2f2f2">LIFT LOBBY</text><text x="704" y="404.5" font-size="7" textLength="46" lengthAdjust="spacingAndGlyphs" fill="#f2f2f2">NEW TENANT</text><text x="1190" y="404.5" font-size="7" textLength="47" lengthAdjust="spacingAndGlyphs" fill="#f2f2f2">NEW TENANT</text><text x="662" y="652.1" font-size="7.2" textLength="58" lengthAdjust="spacingAndGlyphs" fill="#f2f2f2">OPEN TO BELOW</text><text x="1225.7" y="652.1" font-size="7.2" textLength="58.3" lengthAdjust="spacingAndGlyphs" fill="#f2f2f2">OPEN TO BELOW</text><text x="951" y="644.2" font-size="9" textLength="57" lengthAdjust="spacingAndGlyphs" fill="#f2f2f2">MAIN LOBBY</text><text x="934.9" y="759.2" font-size="9.6" textLength="86.1" lengthAdjust="spacingAndGlyphs" fill="#f2f2f2">ENTRANCE PORCH</text><text x="1877.5" y="633.3" font-size="7.2" textLength="41" lengthAdjust="spacingAndGlyphs" fill="#f2f2f2">OPEN TO B</text></svg>
<span class="t" style="left:283px;top:187.0px;height:16px;line-height:16px;font-size:12px;color:#f0f0f0;transform:scaleX(1.0302);">[−][Top][2D Wireframe]</span>
<svg class="b" style="left:1844px;top:186px;" width="56" height="18" viewBox="0 0 56 18"><path d="M3 12.500h10" stroke="#fff" stroke-width="2.200"/><path d="M25.500 7.500v-2.500h7.500v7.500h-2.500" stroke="#fff" fill="none" stroke-width="1.600"/><rect x="22.800" y="8" width="7" height="7" stroke="#fff" fill="none" stroke-width="1.800"/><path d="M43 5.500l8 8M51 5.500l-8 8" stroke="#fff" stroke-width="2.200"/></svg>
<svg class="b" style="left:1740px;top:210px" width="168" height="200" viewBox="1740 210 168 200"><circle cx="1824.8" cy="287" r="54.200" fill="none" stroke="#42464b" stroke-width="13"/><rect x="1799.3" y="261.600" width="51.500" height="51.200" fill="#a7adb1" stroke="#c2c6c9" stroke-width=".800"/><rect x="1809.500" y="271.500" width="31.500" height="31.500" fill="#9da3a7"/><rect x="1801.600" y="374.700" width="47" height="16.800" rx="3.500" fill="#9a9ea2" stroke="#b9bcbf" stroke-width=".800"/><path d="M1833.500 380.500h10l-5 6z" fill="none" stroke="#d8dadc" stroke-width="1"/></svg>
<span class="t" style="left:1817.3px;top:219.0px;height:25px;line-height:25px;font-size:21px;color:#b4b7ba;font-weight:bold;transform:scaleX(0.9891);">N</span>
<span class="t" style="left:1818px;top:331.5px;height:25px;line-height:25px;font-size:21px;color:#b4b7ba;font-weight:bold;transform:scaleX(0.9994);">S</span>
<span class="t" style="left:1758px;top:275.5px;height:25px;line-height:25px;font-size:21px;color:#b4b7ba;font-weight:bold;transform:scaleX(1.0343);">W</span>
<span class="t" style="left:1874.5px;top:275.5px;height:25px;line-height:25px;font-size:21px;color:#b4b7ba;font-weight:bold;transform:scaleX(0.9281);">E</span>
<span class="t" style="left:1814px;top:279.0px;height:17px;line-height:17px;font-size:13px;color:#4c5258;font-weight:bold;transform:scaleX(0.8305);">TOP</span>
<span class="t" style="left:1806px;top:375.2px;height:15.5px;line-height:15.5px;font-size:11.5px;color:#4a4f55;transform:scaleX(0.8573);">WCS</span>
<svg class="b" style="left:1868px;top:412px" width="40" height="224" viewBox="1868 412 40 224"><rect x="1872" y="417" width="32.500" height="211" rx="4" fill="#909398" fill-opacity=".45" stroke="#30353b" stroke-opacity=".7" stroke-width="1"/><circle cx="1897.5" cy="422.500" r="3.200" fill="none" stroke="#4a4f56"/><path d="M1895.5 420.500l4 4M1899.500 420.500l-4 4" stroke="#4a4f56"/><path d="M1876 446a11 11 0 0 1 11-11h11v11a11 11 0 0 1-22 0z" fill="none" stroke="#474c53" stroke-width="1.300"/><circle cx="1887" cy="446" r="6" fill="none" stroke="#474c53" stroke-width="1.300"/><path d="M1885 466h5l-2.500 3z" fill="#474c53"/><path d="M1875 473.500h27" stroke="#6a7078"/><path d="M1880 497c-3-6-5-9-3-10s4 3 5 4v-10c0-2 3-2 3 0v-3c0-2 3-2 3 0v1c0-2 3-2 3 0v2c0-2 3-2 3 0v10c0 4-2 6-3 8z" fill="none" stroke="#474c53" stroke-width="1.300"/><path d="M1877 508l12 12M1889 508l-12 12" stroke="#474c53" stroke-width="1.400"/><circle cx="1892" cy="519" r="5" fill="none" stroke="#474c53" stroke-width="1.300"/><path d="M1896 523l4 4" stroke="#474c53" stroke-width="2"/><path d="M1885 535h5l-2.500 3z" fill="#474c53"/><path d="M1887.500 545v22M1884 550l3.500-5 3.500 5" fill="none" stroke="#474c53" stroke-width="1.400"/><ellipse cx="1887.500" cy="558" rx="11" ry="4" fill="none" stroke="#474c53" stroke-width="1.300"/><path d="M1885 573h5l-2.500 3z" fill="#474c53"/><path d="M1875 580.500h27" stroke="#6a7078"/><rect x="1877" y="586.500" width="6" height="5" fill="none" stroke="#474c53"/><rect x="1885" y="586.500" width="6" height="5" fill="none" stroke="#474c53"/><rect x="1893" y="586.500" width="6" height="5" fill="none" stroke="#474c53"/><rect x="1877" y="595.500" width="15" height="13" fill="none" stroke="#474c53" stroke-width="1.300"/><path d="M1881.500 598v8l7-4z" fill="#474c53"/><circle cx="1897.500" cy="621.500" r="3.200" fill="none" stroke="#474c53"/><path d="M1895.500 621.500h4" stroke="#474c53"/></svg>
<svg class="b" style="left:290px;top:900px;" width="90" height="85" viewBox="290 900 90 85"><path d="M300.600 922.500V967.500M306 972H351" stroke="#f0f0f0" stroke-width="1.300"/><rect x="296.500" y="967.500" width="9" height="9" fill="none" stroke="#f0f0f0" stroke-width="1.300"/><path d="M302 905.500l6.500 6.500 6.500-6.500M308.500 912v6" stroke="#f0f0f0" stroke-width="1.300" fill="none"/><path d="M355 958.500l13 12.500M368 958.500l-13 12.500" stroke="#f0f0f0" stroke-width="1.300"/></svg>
<div class="b" style="left:948px;top:878px;width:319px;height:45px;background:rgba(112,114,116,.46);border-radius:2px;"></div>
<span class="t" style="left:950px;top:878.6px;height:15.63px;line-height:15.63px;font-size:11.63px;color:#9a9c9e;font-family:'Liberation Mono',monospace;white-space:pre;">Autodesk DWG.  This file is a TrustedDWG last</span>
<span class="t" style="left:950px;top:893.5px;height:15.63px;line-height:15.63px;font-size:11.63px;color:#9a9c9e;font-family:'Liberation Mono',monospace;white-space:pre;">saved by an Autodesk application or Autodesk</span>
<span class="t" style="left:950px;top:908.4px;height:15.63px;line-height:15.63px;font-size:11.63px;color:#9a9c9e;font-family:'Liberation Mono',monospace;white-space:pre;">licensed application.</span>
<div class="b" style="left:948px;top:928px;width:60px;height:15px;background:rgba(112,114,116,.46);border-radius:2px;"></div>
<span class="t" style="left:950px;top:928.2px;height:15.63px;line-height:15.63px;font-size:11.63px;color:#9a9c9e;font-family:'Liberation Mono',monospace;">Command:</span>
<div class="b" style="left:948px;top:949px;width:60px;height:15px;background:rgba(112,114,116,.46);border-radius:2px;"></div>
<span class="t" style="left:950px;top:949.2px;height:15.63px;line-height:15.63px;font-size:11.63px;color:#9a9c9e;font-family:'Liberation Mono',monospace;">Command:</span>
<div class="b" style="left:886px;top:966.5px;width:417px;height:25.5px;background:#bdbebf;border-radius:3px;"></div>
<div class="b" style="left:886px;top:966.5px;width:56px;height:25.5px;background:linear-gradient(#585858,#3f3f3f);border-radius:3px 0 0 3px;"></div>
<div class="b" style="left:890px;top:970px;width:4px;height:18px;background:repeating-linear-gradient(#8a8a8a 0 1px,transparent 1px 3px);"></div>
<svg class="b" style="left:897px;top:970px;" width="44" height="18" viewBox="0 0 44 18"><path d="M5 5l8 8M13 5l-8 8" stroke="#e6e6e6" stroke-width="2"/><path d="M26 15l7-7a3.500 3.500 0 0 1 4.500-4.500l-2.500 2.500 1.500 1.500 2.500-2.500a3.500 3.500 0 0 1-4.500 4.500l-7 7z" fill="#e6e6e6"/></svg>
<svg class="b" style="left:946px;top:971px;" width="32" height="16" viewBox="0 0 32 16"><rect x="1" y="1.500" width="15" height="11.500" rx="1" fill="#d0d0d0" stroke="#555" stroke-width="1.200"/><path d="M3.500 5l3 2.500-3 2.500M8 10.500h5" stroke="#444" fill="none" stroke-width="1.100"/><path d="M20 6h6l-3 3.500z" fill="#555"/></svg>
<span class="t" style="left:979px;top:971.7px;height:15.63px;line-height:15.63px;font-size:11.63px;color:#707274;font-style:italic;font-family:'Liberation Mono',monospace;transform:scaleX(0.9877);">Type a command</span>
<svg class="b" style="left:1290px;top:975px;" width="10" height="8" viewBox="0 0 10 8"><path d="M1 6.500h8l-4-5z" fill="#333"/></svg>
<span class="t" style="left:1599px;top:938.0px;height:24px;line-height:24px;font-size:20px;color:#8e8f8f;transform:scaleX(0.9947);">Activate Windows</span>
<span class="t" style="left:1599px;top:963.8px;height:18.5px;line-height:18.5px;font-size:14.5px;color:#8e8f8f;transform:scaleX(1.0310);">Go to Settings to activate Windows.</span>
<div class="b" style="left:8px;top:993px;width:1901px;height:29px;background:#3b3b3b;"></div>
<svg class="b" style="left:0;top:990px" width="900" height="30" viewBox="0 990 900 30"><defs><linearGradient id="tg" x1="0" y1="0" x2="0" y2="1"><stop offset="0" stop-color="#5f5f5f"/><stop offset="1" stop-color="#8a8a8a"/></linearGradient></defs><path d="M15.5 994Q17.5 994 18.3 996L22.5 1007Q23.5 1010.5 27 1010.5H67.5Q71.0 1010.5 72.0 1007L74.2 996Q75 994 77 994z" fill="url(#tg)"/><path d="M76.5 994Q78.5 994 79.3 996L82.0 1007Q83.0 1010.5 86.5 1010.5H138.5Q142.0 1010.5 143.0 1007L145.7 996Q146.5 994 148.5 994z" fill="#525252"/><path d="M147.5 994Q149.5 994 150.3 996L153.0 1007Q154.0 1010.5 157.5 1010.5H180.5Q184.0 1010.5 185.0 1007L187.7 996Q188.5 994 190.5 994z" fill="#525252"/><path d="M189.5 994Q191.5 994 192.3 996L195.0 1007Q196.0 1010.5 199.5 1010.5H229.5Q233.0 1010.5 234.0 1007L236.7 996Q237.5 994 239.5 994z" fill="#525252"/><path d="M237.5 994Q239.5 994 240.3 996L243.0 1007Q244.0 1010.5 247.5 1010.5H274.5Q278.0 1010.5 279.0 1007L281.7 996Q282.5 994 284.5 994z" fill="#525252"/><path d="M282.5 994Q284.5 994 285.3 996L288.0 1007Q289.0 1010.5 292.5 1010.5H322.5Q326.0 1010.5 327.0 1007L329.7 996Q330.5 994 332.5 994z" fill="#525252"/><path d="M330.5 994Q332.5 994 333.3 996L336.0 1007Q337.0 1010.5 340.5 1010.5H364.5Q368.0 1010.5 369.0 1007L371.7 996Q372.5 994 374.5 994z" fill="#525252"/><path d="M373.5 994Q375.5 994 376.3 996L379.0 1007Q380.0 1010.5 383.5 1010.5H414.5Q418.0 1010.5 419.0 1007L421.7 996Q422.5 994 424.5 994z" fill="#525252"/><path d="M423.5 994Q425.5 994 426.3 996L429.0 1007Q430.0 1010.5 433.5 1010.5H490.5Q494.0 1010.5 495.0 1007L497.7 996Q498.5 994 500.5 994z" fill="#525252"/><path d="M498.5 994Q500.5 994 501.3 996L504.0 1007Q505.0 1010.5 508.5 1010.5H530.5Q534.0 1010.5 535.0 1007L537.7 996Q538.5 994 540.5 994z" fill="#525252"/><path d="M540.5 994Q542.5 994 543.3 996L546.0 1007Q547.0 1010.5 550.5 1010.5H619.5Q623.0 1010.5 624.0 1007L626.7 996Q627.5 994 629.5 994z" fill="#525252"/><path d="M627.5 994Q629.5 994 630.3 996L633.0 1007Q634.0 1010.5 637.5 1010.5H706.5Q710.0 1010.5 711.0 1007L713.7 996Q714.5 994 716.5 994z" fill="#525252"/><path d="M714.5 994Q716.5 994 717.3 996L720.0 1007Q721.0 1010.5 724.5 1010.5H796.5Q800.0 1010.5 801.0 1007L803.7 996Q804.5 994 806.5 994z" fill="#525252"/><path d="M808 996h17c5 0 6 3 6 6s-2 6-6 6h-8c-5 0-7-6-9-12z" fill="#505050"/><path d="M816 1002h8M820 998v8" stroke="#e0e0e0" stroke-width="1.600"/></svg>
<span class="t" style="left:31px;top:994.0px;height:16px;line-height:16px;font-size:12px;color:#fff;font-weight:bold;transform:scaleX(1.0097);">Model</span>
<span class="t" style="left:89px;top:994.0px;height:16px;line-height:16px;font-size:12px;color:#c9c9d2;transform:scaleX(0.8391);">EXISTING</span>
<span class="t" style="left:160px;top:994.0px;height:16px;line-height:16px;font-size:12px;color:#c9c9d2;transform:scaleX(0.8179);">FLP</span>
<span class="t" style="left:202px;top:994.0px;height:16px;line-height:16px;font-size:12px;color:#c9c9d2;transform:scaleX(0.9375);">DEM</span>
<span class="t" style="left:250px;top:994.0px;height:16px;line-height:16px;font-size:12px;color:#c9c9d2;transform:scaleX(0.8683);">RCP</span>
<span class="t" style="left:295px;top:994.0px;height:16px;line-height:16px;font-size:12px;color:#c9c9d2;transform:scaleX(0.8521);">FFLP</span>
<span class="t" style="left:343px;top:994.0px;height:16px;line-height:16px;font-size:12px;color:#c9c9d2;transform:scaleX(0.8377);">PLP</span>
<span class="t" style="left:386px;top:994.0px;height:16px;line-height:16px;font-size:12px;color:#c9c9d2;transform:scaleX(0.8473);">PPLP</span>
<span class="t" style="left:436px;top:994.0px;height:16px;line-height:16px;font-size:12px;color:#c9c9d2;transform:scaleX(0.8860);">ELE ABCD</span>
<span class="t" style="left:511px;top:994.0px;height:16px;line-height:16px;font-size:12px;color:#c9c9d2;transform:scaleX(0.7725);">TLP</span>
<span class="t" style="left:553px;top:994.0px;height:16px;line-height:16px;font-size:12px;color:#c9c9d2;transform:scaleX(0.9500);">Details01-05</span>
<span class="t" style="left:640px;top:994.0px;height:16px;line-height:16px;font-size:12px;color:#c9c9d2;transform:scaleX(0.9500);">Details06-10</span>
<span class="t" style="left:727px;top:994.0px;height:16px;line-height:16px;font-size:12px;color:#c9c9d2;transform:scaleX(0.9597);">Details 11-14</span>
<div class="b" style="left:1317px;top:993px;width:592px;height:28px;background:#6e6e6e;"></div>
<div class="b" style="left:1319px;top:995px;width:47px;height:24px;background:#4c4c4c;border:1px solid #747474;box-sizing:border-box;"></div>
<div class="b" style="left:1369px;top:995px;width:63px;height:24px;background:#4c4c4c;border:1px solid #747474;box-sizing:border-box;"></div>
<div class="b" style="left:1435px;top:995px;width:101px;height:24px;background:#4c4c4c;border:1px solid #747474;box-sizing:border-box;"></div>
<div class="b" style="left:1538px;top:995px;width:63px;height:24px;background:#4c4c4c;border:1px solid #747474;box-sizing:border-box;"></div>
<div class="b" style="left:1604px;top:995px;width:105px;height:24px;background:#4c4c4c;border:1px solid #747474;box-sizing:border-box;"></div>
<div class="b" style="left:1712px;top:995px;width:64px;height:24px;background:#4c4c4c;border:1px solid #747474;box-sizing:border-box;"></div>
<div class="b" style="left:1779px;top:995px;width:24px;height:24px;background:#4c4c4c;border:1px solid #747474;box-sizing:border-box;"></div>
<div class="b" style="left:1806px;top:995px;width:49px;height:24px;background:#4c4c4c;border:1px solid #747474;box-sizing:border-box;"></div>
<div class="b" style="left:1858px;top:995px;width:48px;height:24px;background:#4c4c4c;border:1px solid #747474;box-sizing:border-box;"></div>
<div class="b" style="left:1751px;top:996px;width:1px;height:22px;background:#747474;"></div>
<div class="b" style="left:1436px;top:996px;width:22px;height:22px;background:#5b8fc9;"></div>
<div class="b" style="left:1539px;top:996px;width:22px;height:22px;background:#5b8fc9;"></div>
<div class="b" style="left:1563px;top:996px;width:22px;height:22px;background:#5b8fc9;"></div>
<div class="b" style="left:1605px;top:996px;width:22px;height:22px;background:#5b8fc9;"></div>
<span class="t" style="left:1323px;top:999.0px;height:16px;line-height:16px;font-size:12px;color:#fff;transform:scaleX(0.9373);">MODEL</span>
<span class="t" style="left:1681px;top:999.0px;height:16px;line-height:16px;font-size:12px;color:#fff;transform:scaleX(0.7793);">1:1</span>
<svg class="b" style="left:0;top:990px" width="1911" height="32" viewBox="0 990 1911 32"><path d="M1373 1003.500h15M1373 1009.500h15M1377.500 999v15M1383.500 999v15" stroke="#f0f0f0" stroke-width="1.200"/><rect x="1399" y="1001" width="2" height="2" fill="#f0f0f0"/><rect x="1399" y="1006" width="2" height="2" fill="#f0f0f0"/><rect x="1399" y="1011" width="2" height="2" fill="#f0f0f0"/><rect x="1404" y="1001" width="2" height="2" fill="#f0f0f0"/><rect x="1404" y="1006" width="2" height="2" fill="#f0f0f0"/><rect x="1404" y="1011" width="2" height="2" fill="#f0f0f0"/><rect x="1409" y="1001" width="2" height="2" fill="#f0f0f0"/><rect x="1409" y="1006" width="2" height="2" fill="#f0f0f0"/><rect x="1409" y="1011" width="2" height="2" fill="#f0f0f0"/><path d="M1421.5 1005.5h6l-3.0 3.0z" fill="#fff"/><path d="M1440.500 999v15h15M1440.500 1009.500h4.500v4.500" stroke="#f0f0f0" fill="none" stroke-width="1.300"/><circle cx="1470" cy="1008" r="6" stroke="#f0f0f0" fill="none" stroke-width="1.200"/><path d="M1470 1008h8M1470 1008l7-8" stroke="#f0f0f0" stroke-width="1.200"/><path d="M1487.5 1005.5h6l-3.0 3.0z" fill="#fff"/><path d="M1503 1000l13 13" stroke="#d08a5a" stroke-width="1.200"/><path d="M1509.500 999v16" stroke="#4ad06a" stroke-width="1.200" stroke-dasharray="2 1"/><circle cx="1509.500" cy="1006.500" r="1.600" fill="#4c4c4c" stroke="#f0f0f0"/><path d="M1526.5 1005.5h6l-3.0 3.0z" fill="#fff"/><path d="M1543 1012.500h14M1543 1012.500l13-11" stroke="#f0f0f0" stroke-width="1.300"/><rect x="1547.500" y="1005" width="3" height="3" fill="#f0f0f0"/><rect x="1568.500" y="1002.500" width="12" height="11" stroke="#f0f0f0" fill="none" stroke-width="1.300"/><rect x="1566.500" y="1000" width="4" height="4" fill="#5b8fc9" stroke="#f0f0f0"/><path d="M1590.5 1005.5h6l-3.0 3.0z" fill="#fff"/><path d="M1615 999l2.500 9 5 6.500-6-3.500-1.500 3-1.500-3-6 3.500 5-6.500z" fill="#f0f0f0"/><circle cx="1622" cy="1002.500" r="2" stroke="#f0f0f0" fill="none"/><path d="M1638 999l2.500 9 5 6.500-6-3.500-1.500 3-1.500-3-6 3.500 5-6.500z" fill="#cfcfcf"/><path d="M1644 999l3-1-1 2.500 2-.5-4 4 1-3-2 .5z" fill="#cfcfcf"/><path d="M1663 999l2.500 9 5 6.500-6-3.500-1.500 3-1.500-3-6 3.500 5-6.500z" fill="#cfcfcf"/><path d="M1699.0 1005.5h6l-3.0 3.0z" fill="#fff"/><g transform="translate(1723.500 1007)"><circle r="5" fill="none" stroke="#e8e8e8" stroke-width="3.600"/><rect x="-1.500" y="-8" width="3" height="3.500" fill="#e8e8e8" transform="rotate(0)"/><rect x="-1.500" y="-8" width="3" height="3.500" fill="#e8e8e8" transform="rotate(45)"/><rect x="-1.500" y="-8" width="3" height="3.500" fill="#e8e8e8" transform="rotate(90)"/><rect x="-1.500" y="-8" width="3" height="3.500" fill="#e8e8e8" transform="rotate(135)"/><rect x="-1.500" y="-8" width="3" height="3.500" fill="#e8e8e8" transform="rotate(180)"/><rect x="-1.500" y="-8" width="3" height="3.500" fill="#e8e8e8" transform="rotate(225)"/><rect x="-1.500" y="-8" width="3" height="3.500" fill="#e8e8e8" transform="rotate(270)"/><rect x="-1.500" y="-8" width="3" height="3.500" fill="#e8e8e8" transform="rotate(315)"/></g><path d="M1740.5 1005.5h6l-3.0 3.0z" fill="#fff"/><path d="M1756 1007h16M1764 999v16" stroke="#f0f0f0" stroke-width="1.600"/><rect x="1783.500" y="1000.500" width="6" height="6" stroke="#f0f0f0" fill="none"/><circle cx="1796" cy="1005.500" r="3" stroke="#f0f0f0" fill="none"/><path d="M1786.500 1014.500l3.500-6 3.500 6z" stroke="#f0f0f0" fill="none"/><rect x="1810" y="1000" width="10" height="13" fill="#6db8f2"/><path d="M1810 1009h7v4h-7z" fill="#e8d84a"/><circle cx="1813.500" cy="1004.500" r="2" fill="none" stroke="#fff"/><path d="M1813.500 1000v9M1810 1004.500h8" stroke="#fff" stroke-width=".800"/><path d="M1818 1011l2.500 2.500 4.500-5" stroke="#2bb04a" fill="none" stroke-width="1.800"/><rect x="1834" y="1000" width="13" height="10" fill="#e0e0e0"/><path d="M1835 1009l5-7 4 5" stroke="#666" fill="none"/><circle cx="1840" cy="1002" r="1" fill="#3a7ad0"/><path d="M1838.500 1015l4.500-8 4.500 8z" fill="#c9714a"/><path d="M1843 1010v3" stroke="#fff"/><rect x="1862.500" y="1001.500" width="15" height="11" stroke="#f0f0f0" fill="none" stroke-width="1.200"/><path d="M1865 1010l3-3M1865 1007.500v2.500h2.500M1872 1007l3-3M1872.500 1004h2.500v2.500" stroke="#f0f0f0" fill="none" stroke-width="1"/><path d="M1886 1001.500h16M1886 1007h16M1886 1012.500h16" stroke="#f0f0f0" stroke-width="1.800"/></svg>
</div></div>
</body></html>
